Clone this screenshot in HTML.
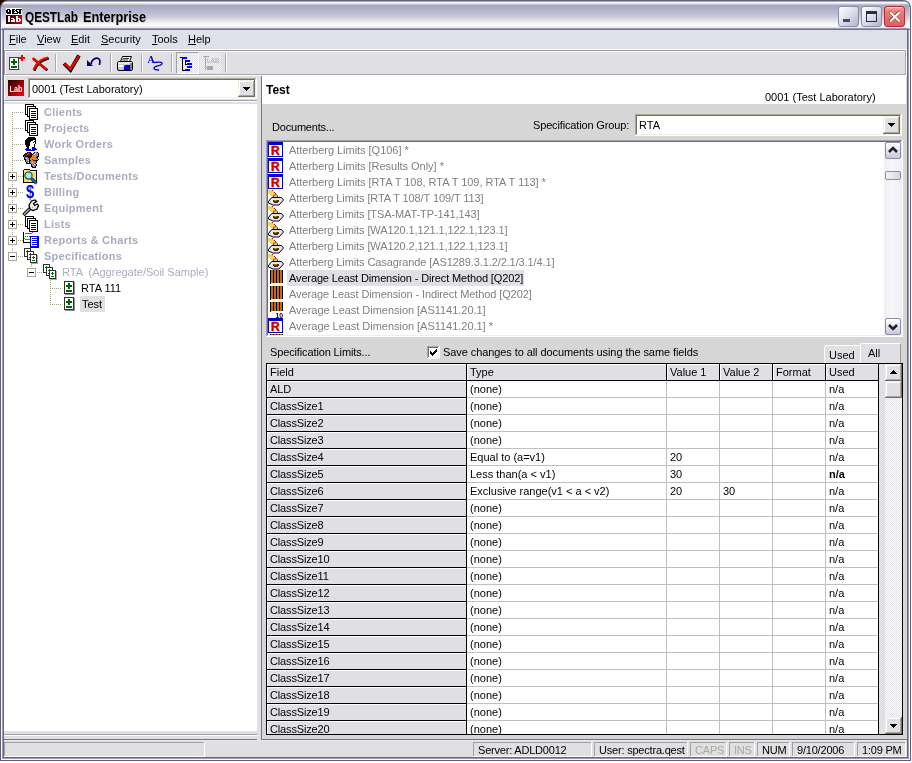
<!DOCTYPE html>
<html><head><meta charset="utf-8">
<style>
*{box-sizing:border-box}
html,body{margin:0;padding:0}
body{will-change:transform;width:912px;height:763px;overflow:hidden;position:relative;background:#fff;font-family:"Liberation Sans",sans-serif;font-size:11px;color:#000}
.a{position:absolute}
.t{position:absolute;white-space:pre;line-height:13px}
.u{text-decoration:underline;text-underline-offset:1px}
svg{position:absolute;overflow:visible}
.g{color:#A9ADC0;font-weight:bold}
</style></head><body>

<div class="a" style="left:0px;top:0px;width:911px;height:761px;background:#5F5E7E;"></div>
<div class="a" style="left:1px;top:1px;width:909px;height:759px;background:#FAFAFC;"></div>
<div class="a" style="left:2px;top:2px;width:907px;height:757px;background:#9C9BB4;"></div>
<div class="a" style="left:3px;top:3px;width:905px;height:755px;background:#676685;"></div>
<div class="a" style="left:4px;top:30px;width:903px;height:727px;background:#E0DFE3;"></div>
<div class="a" style="left:0px;top:0px;width:8px;height:8px;background:#2A0505;"></div>
<div class="a" style="left:902px;top:0px;width:10px;height:8px;background:#F4F4FA;"></div>
<div class="a" style="left:0;top:0;width:911px;height:30px;border-radius:8px 8px 0 0;background:#5F5E7E"></div>
<div class="a" style="left:1px;top:1px;width:909px;height:29px;border-radius:7px 7px 0 0;overflow:hidden;background:linear-gradient(to bottom,#A8A7BE 0px,#A8A7BE 1px,#FFFFFF 1px,#FFFFFF 2px,#E4E3EC 2px,#E4E3EC 3px,#C3C3D4 3px,#C3C3D4 4px,#A8A8C2 4px,#A9AAC4 6px,#B8BACD 11px,#CBCDD9 16px,#E6E7ED 20px,#F6F6F8 23px,#FFFFFF 25px,#E9E8E6 26px,#E9E8E6 27px,#9C9AB0 27px,#9C9AB0 28px,#75738F 28px,#75738F 29px)"></div>
<div class="a" style="left:1px;top:7px;width:1px;height:22px;background:linear-gradient(to bottom,#C4C4D6,#FFFFFF)"></div>
<div class="a" style="left:909px;top:7px;width:1px;height:22px;background:linear-gradient(to bottom,#C4C4D6,#FFFFFF)"></div>
<div class="a" style="left:911px;top:0px;width:1px;height:763px;background:#FFFFFF;"></div>
<div class="a" style="left:6px;top:8px;width:16px;height:7px;background:#FFFFFF;"></div>
<div class="a" style="left:6px;top:15px;width:16px;height:9px;background:linear-gradient(100deg,#200000 0%,#700000 45%,#E00000 100%)"></div>
<svg style="left:6px;top:8px" width="16" height="16" viewBox="0 0 16 16" shape-rendering="crispEdges"><rect x="1" y="1" width="3" height="1" fill="#000000"/><rect x="6" y="1" width="3" height="1" fill="#000000"/><rect x="10" y="1" width="6" height="1" fill="#000000"/><rect x="0" y="2" width="2" height="1" fill="#000000"/><rect x="3" y="2" width="2" height="1" fill="#000000"/><rect x="6" y="2" width="2" height="1" fill="#000000"/><rect x="9" y="2" width="2" height="1" fill="#000000"/><rect x="13" y="2" width="2" height="1" fill="#000000"/><rect x="0" y="3" width="2" height="1" fill="#000000"/><rect x="3" y="3" width="2" height="1" fill="#000000"/><rect x="6" y="3" width="3" height="1" fill="#000000"/><rect x="10" y="3" width="2" height="1" fill="#000000"/><rect x="13" y="3" width="2" height="1" fill="#000000"/><rect x="0" y="4" width="5" height="1" fill="#000000"/><rect x="6" y="4" width="2" height="1" fill="#000000"/><rect x="11" y="4" width="4" height="1" fill="#000000"/><rect x="1" y="5" width="4" height="1" fill="#000000"/><rect x="6" y="5" width="6" height="1" fill="#000000"/><rect x="13" y="5" width="2" height="1" fill="#000000"/><rect x="2" y="8" width="2" height="1" fill="#FFFFFF"/><rect x="10" y="8" width="2" height="1" fill="#FFFFFF"/><rect x="2" y="9" width="2" height="1" fill="#FFFFFF"/><rect x="10" y="9" width="2" height="1" fill="#FFFFFF"/><rect x="2" y="10" width="2" height="1" fill="#FFFFFF"/><rect x="5" y="10" width="3" height="1" fill="#FFFFFF"/><rect x="10" y="10" width="4" height="1" fill="#FFFFFF"/><rect x="2" y="11" width="2" height="1" fill="#FFFFFF"/><rect x="7" y="11" width="2" height="1" fill="#FFFFFF"/><rect x="10" y="11" width="2" height="1" fill="#FFFFFF"/><rect x="13" y="11" width="2" height="1" fill="#FFFFFF"/><rect x="2" y="12" width="2" height="1" fill="#FFFFFF"/><rect x="5" y="12" width="4" height="1" fill="#FFFFFF"/><rect x="10" y="12" width="2" height="1" fill="#FFFFFF"/><rect x="13" y="12" width="2" height="1" fill="#FFFFFF"/><rect x="2" y="13" width="2" height="1" fill="#FFFFFF"/><rect x="5" y="13" width="4" height="1" fill="#FFFFFF"/><rect x="10" y="13" width="4" height="1" fill="#FFFFFF"/></svg>
<div class="t" style="left:25px;top:9px;font-size:14px;font-weight:bold;line-height:17px;transform:scaleX(0.84);transform-origin:0 0;text-shadow:1px 1px 0 rgba(120,120,140,0.25)">QESTLab</div>
<div class="t" style="left:83px;top:9px;font-size:14px;font-weight:bold;line-height:17px;transform:scaleX(0.91);transform-origin:0 0;text-shadow:1px 1px 0 rgba(120,120,140,0.25)">Enterprise</div>
<div class="a" style="left:838px;top:6px;width:21px;height:21px;border:1px solid #8C8CA6;border-radius:3px;background:linear-gradient(135deg,#FFFFFF 0%,#E8E8F2 35%,#C4C4D6 80%,#B0B0C8 100%)"></div>
<div class="a" style="left:861px;top:6px;width:21px;height:21px;border:1px solid #8C8CA6;border-radius:3px;background:linear-gradient(135deg,#FFFFFF 0%,#E8E8F2 35%,#C4C4D6 80%,#B0B0C8 100%)"></div>
<div class="a" style="left:843px;top:19px;width:7px;height:3px;background:#4A4A68;"></div>
<div class="a" style="left:866px;top:11px;width:11px;height:11px;border:1px solid #2A2A40;border-top-width:3px"></div>
<div class="a" style="left:884px;top:6px;width:21px;height:21px;border:1px solid #B8283C;border-radius:3px;background:linear-gradient(to bottom,#F2A89A 0%,#E88078 25%,#E07068 60%,#D86060 100%)"></div>
<div class="a" style="left:887px;top:7px;width:15px;height:1px;background:#F4D8A0;"></div>
<svg style="left:884px;top:6px" width="21" height="21" viewBox="0 0 21 21" shape-rendering="crispEdges"><path d="M5.6 5.6 L15.4 15.4 M15.4 5.6 L5.6 15.4" stroke="#3A1010" stroke-width="2.6" shape-rendering="geometricPrecision"/><path d="M6 6 L15.6 15.6 M15.6 6 L6 15.6" stroke="#fff" stroke-width="2.1" shape-rendering="geometricPrecision"/></svg>
<div class="a" style="left:4px;top:30px;width:903px;height:19px;background:#DEE0EA;"></div>
<div class="a" style="left:4px;top:49px;width:903px;height:1px;background:#FFFFFF;"></div>
<div class="t" style="left:9px;top:33px;"><span class='u'>F</span>ile</div>
<div class="t" style="left:37px;top:33px;"><span class='u'>V</span>iew</div>
<div class="t" style="left:71px;top:33px;"><span class='u'>E</span>dit</div>
<div class="t" style="left:101px;top:33px;"><span class='u'>S</span>ecurity</div>
<div class="t" style="left:152px;top:33px;"><span class='u'>T</span>ools</div>
<div class="t" style="left:188px;top:33px;"><span class='u'>H</span>elp</div>
<div class="a" style="left:4px;top:50px;width:903px;height:1px;background:#9C9CA0;"></div>
<div class="a" style="left:4px;top:51px;width:902px;height:23px;background:#E0DFE3;"></div>
<div class="a" style="left:5px;top:51px;width:900px;height:1px;background:#FFFFFF;"></div>
<div class="a" style="left:4px;top:50px;width:1px;height:25px;background:#9C9CA0;"></div>
<div class="a" style="left:5px;top:51px;width:1px;height:23px;background:#FFFFFF;"></div>
<div class="a" style="left:4px;top:74px;width:903px;height:1px;background:#A8A7AC;"></div>
<div class="a" style="left:4px;top:75px;width:903px;height:1px;background:#FFFFFF;"></div>
<div class="a" style="left:905px;top:50px;width:1px;height:25px;background:#A8A7AC;"></div>
<div class="a" style="left:906px;top:50px;width:1px;height:25px;background:#FFFFFF;"></div>
<div class="a" style="left:55px;top:54px;width:1px;height:18px;background:#A8A7AC;"></div>
<div class="a" style="left:56px;top:54px;width:1px;height:18px;background:#FFFFFF;"></div>
<div class="a" style="left:110px;top:54px;width:1px;height:18px;background:#A8A7AC;"></div>
<div class="a" style="left:111px;top:54px;width:1px;height:18px;background:#FFFFFF;"></div>
<div class="a" style="left:141px;top:54px;width:1px;height:18px;background:#A8A7AC;"></div>
<div class="a" style="left:142px;top:54px;width:1px;height:18px;background:#FFFFFF;"></div>
<div class="a" style="left:171px;top:54px;width:1px;height:18px;background:#A8A7AC;"></div>
<div class="a" style="left:172px;top:54px;width:1px;height:18px;background:#FFFFFF;"></div>
<div class="a" style="left:225px;top:54px;width:1px;height:18px;background:#A8A7AC;"></div>
<div class="a" style="left:226px;top:54px;width:1px;height:18px;background:#FFFFFF;"></div>
<svg style="left:9px;top:54px" width="17" height="16" viewBox="0 0 17 16" shape-rendering="crispEdges">
<rect x="0.5" y="3.5" width="9" height="12" fill="#fff" stroke="#404040"/>
<rect x="10" y="15" width="1" height="1" fill="#A0A0A0"/>
<rect x="4" y="5" width="2" height="6" fill="#006400"/><rect x="2" y="7" width="6" height="2" fill="#006400"/>
<rect x="2" y="12" width="6" height="2" fill="#006400"/>
<rect x="12" y="1" width="2" height="6" fill="#FF0000"/><rect x="10" y="3" width="6" height="2" fill="#FF0000"/>
</svg>
<svg style="left:31px;top:56px" width="18" height="16" viewBox="0 0 18 16" shape-rendering="crispEdges"><g transform="translate(0.8,0.8)"><path d="M1.5 2 L15.5 13.5 M17 1.5 C11 3 7 6 5 9 L2.5 14" stroke="#000" stroke-width="2.4" fill="none" shape-rendering="geometricPrecision"/></g><path d="M1.5 2 L15.5 13.5 M17 1.5 C11 3 7 6 5 9 L2.5 14" stroke="#FF0000" stroke-width="2.2" fill="none" shape-rendering="geometricPrecision"/></svg>
<svg style="left:63px;top:54px" width="18" height="18" viewBox="0 0 18 18" shape-rendering="crispEdges"><path d="M1 9.5 L7.5 16 L16 1.5" stroke="#000" stroke-width="3.8" fill="none" stroke-linejoin="miter" shape-rendering="geometricPrecision"/><path d="M1.6 9.6 L7.5 15 L15.6 2" stroke="#FF0000" stroke-width="2.1" fill="none" shape-rendering="geometricPrecision"/></svg>
<svg style="left:86px;top:56px" width="16" height="14" viewBox="0 0 16 14" shape-rendering="crispEdges"><path d="M5 8 C6 2 13 0 14 5 L13.5 9" stroke="#000080" stroke-width="1.7" fill="none" shape-rendering="geometricPrecision"/><path d="M1 4 L1 10 L7 10 Z" fill="#000080" shape-rendering="geometricPrecision"/></svg>
<svg style="left:117px;top:55px" width="17" height="17" viewBox="0 0 17 17" shape-rendering="crispEdges">
<path d="M5.5 1.5 L14.5 1.5 L12.5 6.5 L3.5 6.5 Z" fill="#fff" stroke="#000" shape-rendering="geometricPrecision"/>
<path d="M6 3.5 L12 3.5 M5 5 L11 5" stroke="#000" stroke-width="0.8" shape-rendering="geometricPrecision"/>
<rect x="0.5" y="6.5" width="15" height="9" rx="1.5" fill="#C8C8C8" stroke="#000" shape-rendering="geometricPrecision"/>
<rect x="1" y="7" width="14" height="2" fill="#E8E8E8"/>
<rect x="1" y="10" width="5" height="2" fill="#fff"/>
<rect x="7" y="10" width="6" height="5" fill="#000"/>
<rect x="7" y="10" width="5" height="4" fill="#0000E0"/>
<rect x="7" y="10" width="1" height="1" fill="#00E0FF"/>
<rect x="13" y="8" width="2" height="7" fill="#808080"/>
</svg>
<svg style="left:147px;top:54px" width="18" height="18" viewBox="0 0 18 18" shape-rendering="crispEdges"><text x="0.5" y="8.5" font-family="Liberation Serif" font-weight="bold" font-size="10" fill="#0000E0">A</text><path d="M7 8.5 C10 8 16 7.5 15 10 C14 12 7 12 7 14 C7 16 10 16 12 16" stroke="#0000E0" stroke-width="1.3" fill="none" shape-rendering="geometricPrecision"/></svg>
<div class="a" style="left:176px;top:52px;width:23px;height:22px;border:1px solid;border-color:#A0A0A4 #FFFFFF #FFFFFF #A0A0A4;background:repeating-conic-gradient(#F6F6F8 0 25%,#E0DFE3 0 50%) 0 0/2px 2px"></div>
<svg style="left:180px;top:55px" width="14" height="17" viewBox="0 0 14 17" shape-rendering="crispEdges">
<rect x="0" y="2" width="3" height="1" fill="#000"/><rect x="2" y="2" width="1" height="14" fill="#000"/>
<rect x="2" y="15" width="4" height="1" fill="#000"/>
<rect x="2" y="2" width="5" height="2" fill="#0000FF"/>
<rect x="5" y="5" width="5" height="2" fill="#0000FF"/>
<rect x="5" y="5" width="1" height="5" fill="#000"/><rect x="5" y="9" width="2" height="1" fill="#000"/>
<rect x="7" y="8" width="5" height="2" fill="#0000FF"/>
<rect x="7" y="11" width="5" height="2" fill="#0000FF"/>
<rect x="5" y="14" width="5" height="2" fill="#0000FF"/>
</svg>
<div class="a" style="left:200px;top:53px;width:21px;height:20px;background:repeating-conic-gradient(#F2F2F4 0 25%,#E0DFE3 0 50%) 0 0/2px 2px"></div>
<svg style="left:201px;top:55px" width="19" height="16" viewBox="0 0 19 16" shape-rendering="crispEdges">
<g fill="#A8A8AC">
<rect x="2" y="1" width="6" height="1"/><rect x="4" y="1" width="1" height="14"/>
<rect x="6" y="11" width="6" height="2"/><rect x="6" y="13" width="6" height="2"/>
<rect x="5" y="12" width="1" height="1"/>
</g>
<text x="6" y="8" font-family="Liberation Sans" font-size="6.5" fill="#A8A8AC">LAB</text>
</svg>
<div class="a" style="left:4px;top:76px;width:257px;height:663px;background:#E0DFE3;"></div>
<div class="a" style="left:4px;top:76px;width:1px;height:26px;background:#FFFFFF;"></div>
<svg style="left:8px;top:80px" width="16" height="16" viewBox="0 0 16 16" shape-rendering="crispEdges"><defs><linearGradient id="lg2" x1="0" y1="0" x2="1" y2="1"><stop offset="0" stop-color="#200000"/><stop offset="0.5" stop-color="#900000"/><stop offset="1" stop-color="#FF0000"/></linearGradient></defs>
<rect x="0" y="0" width="16" height="16" fill="url(#lg2)"/>
<text x="1.5" y="11.5" font-family="Liberation Sans" font-weight="bold" font-size="8.5" fill="#fff" textLength="13" lengthAdjust="spacingAndGlyphs" shape-rendering="geometricPrecision">Lab</text></svg>
<div class="a" style="left:8px;top:96px;width:16px;height:1px;background:#D8E4EC;"></div>
<div class="a" style="left:28px;top:78px;width:229px;height:1px;background:#ACA899;"></div>
<div class="a" style="left:28px;top:78px;width:1px;height:21px;background:#ACA899;"></div>
<div class="a" style="left:29px;top:79px;width:227px;height:1px;background:#716F64;"></div>
<div class="a" style="left:29px;top:79px;width:1px;height:19px;background:#716F64;"></div>
<div class="a" style="left:28px;top:98px;width:229px;height:1px;background:#FFFFFF;"></div>
<div class="a" style="left:256px;top:78px;width:1px;height:21px;background:#FFFFFF;"></div>
<div class="a" style="left:29px;top:97px;width:227px;height:1px;background:#F1EFE2;"></div>
<div class="a" style="left:255px;top:79px;width:1px;height:19px;background:#F1EFE2;"></div>
<div class="a" style="left:30px;top:80px;width:225px;height:17px;background:#FFFFFF;"></div>
<div class="t" style="left:32px;top:83px;">0001 (Test Laboratory)</div>
<div class="a" style="left:238px;top:80px;width:17px;height:17px;background:#E0DFE3;"></div>
<div class="a" style="left:238px;top:80px;width:17px;height:1px;background:#F1EFE2;"></div>
<div class="a" style="left:238px;top:80px;width:1px;height:17px;background:#F1EFE2;"></div>
<div class="a" style="left:239px;top:81px;width:15px;height:1px;background:#FFFFFF;"></div>
<div class="a" style="left:239px;top:81px;width:1px;height:15px;background:#FFFFFF;"></div>
<div class="a" style="left:238px;top:96px;width:17px;height:1px;background:#716F64;"></div>
<div class="a" style="left:254px;top:80px;width:1px;height:17px;background:#716F64;"></div>
<div class="a" style="left:239px;top:95px;width:15px;height:1px;background:#ACA899;"></div>
<div class="a" style="left:253px;top:81px;width:1px;height:15px;background:#ACA899;"></div>
<div class="a" style="left:243px;top:87px;width:7px;height:1px;background:#000;"></div>
<div class="a" style="left:244px;top:88px;width:5px;height:1px;background:#000;"></div>
<div class="a" style="left:245px;top:89px;width:3px;height:1px;background:#000;"></div>
<div class="a" style="left:246px;top:90px;width:1px;height:1px;background:#000;"></div>
<div class="a" style="left:4px;top:100px;width:253px;height:1px;background:#A0A0A8;"></div>
<div class="a" style="left:4px;top:101px;width:253px;height:1px;background:#FFFFFF;"></div>
<div class="a" style="left:4px;top:102px;width:253px;height:2px;background:#E0DFE3;"></div>
<div class="a" style="left:4px;top:104px;width:253px;height:627px;background:#FFFFFF;"></div>
<div class="a" style="left:4px;top:734px;width:253px;height:1px;background:#A0A0A8;"></div>
<div class="a" style="left:4px;top:735px;width:253px;height:1px;background:#FFFFFF;"></div>
<div class="a" style="left:4px;top:739px;width:253px;height:1px;background:#7A7868;"></div>
<div class="a" style="left:12px;top:112px;width:1px;height:145px;background:repeating-linear-gradient(to bottom,#A0A08C 0 1px,transparent 1px 2px)"></div>
<div class="a" style="left:12px;top:112px;width:12px;height:1px;background:repeating-linear-gradient(to right,#A0A08C 0 1px,transparent 1px 2px)"></div>
<div class="a" style="left:12px;top:128px;width:12px;height:1px;background:repeating-linear-gradient(to right,#A0A08C 0 1px,transparent 1px 2px)"></div>
<div class="a" style="left:12px;top:144px;width:12px;height:1px;background:repeating-linear-gradient(to right,#A0A08C 0 1px,transparent 1px 2px)"></div>
<div class="a" style="left:12px;top:160px;width:12px;height:1px;background:repeating-linear-gradient(to right,#A0A08C 0 1px,transparent 1px 2px)"></div>
<div class="a" style="left:12px;top:176px;width:12px;height:1px;background:repeating-linear-gradient(to right,#A0A08C 0 1px,transparent 1px 2px)"></div>
<div class="a" style="left:12px;top:192px;width:12px;height:1px;background:repeating-linear-gradient(to right,#A0A08C 0 1px,transparent 1px 2px)"></div>
<div class="a" style="left:12px;top:208px;width:12px;height:1px;background:repeating-linear-gradient(to right,#A0A08C 0 1px,transparent 1px 2px)"></div>
<div class="a" style="left:12px;top:224px;width:12px;height:1px;background:repeating-linear-gradient(to right,#A0A08C 0 1px,transparent 1px 2px)"></div>
<div class="a" style="left:12px;top:240px;width:12px;height:1px;background:repeating-linear-gradient(to right,#A0A08C 0 1px,transparent 1px 2px)"></div>
<div class="a" style="left:12px;top:256px;width:12px;height:1px;background:repeating-linear-gradient(to right,#A0A08C 0 1px,transparent 1px 2px)"></div>
<div class="a" style="left:31px;top:264px;width:1px;height:9px;background:repeating-linear-gradient(to bottom,#A0A08C 0 1px,transparent 1px 2px)"></div>
<div class="a" style="left:37px;top:272px;width:6px;height:1px;background:repeating-linear-gradient(to right,#A0A08C 0 1px,transparent 1px 2px)"></div>
<div class="a" style="left:50px;top:280px;width:1px;height:25px;background:repeating-linear-gradient(to bottom,#A0A08C 0 1px,transparent 1px 2px)"></div>
<div class="a" style="left:50px;top:288px;width:11px;height:1px;background:repeating-linear-gradient(to right,#A0A08C 0 1px,transparent 1px 2px)"></div>
<div class="a" style="left:50px;top:304px;width:11px;height:1px;background:repeating-linear-gradient(to right,#A0A08C 0 1px,transparent 1px 2px)"></div>
<div class="a" style="left:8px;top:172px;width:9px;height:9px;background:#FFFFFF;border:1px solid #ACA899"></div>
<div class="a" style="left:10px;top:176px;width:5px;height:1px;background:#000;"></div>
<div class="a" style="left:12px;top:174px;width:1px;height:5px;background:#000;"></div>
<div class="a" style="left:8px;top:188px;width:9px;height:9px;background:#FFFFFF;border:1px solid #ACA899"></div>
<div class="a" style="left:10px;top:192px;width:5px;height:1px;background:#000;"></div>
<div class="a" style="left:12px;top:190px;width:1px;height:5px;background:#000;"></div>
<div class="a" style="left:8px;top:204px;width:9px;height:9px;background:#FFFFFF;border:1px solid #ACA899"></div>
<div class="a" style="left:10px;top:208px;width:5px;height:1px;background:#000;"></div>
<div class="a" style="left:12px;top:206px;width:1px;height:5px;background:#000;"></div>
<div class="a" style="left:8px;top:220px;width:9px;height:9px;background:#FFFFFF;border:1px solid #ACA899"></div>
<div class="a" style="left:10px;top:224px;width:5px;height:1px;background:#000;"></div>
<div class="a" style="left:12px;top:222px;width:1px;height:5px;background:#000;"></div>
<div class="a" style="left:8px;top:236px;width:9px;height:9px;background:#FFFFFF;border:1px solid #ACA899"></div>
<div class="a" style="left:10px;top:240px;width:5px;height:1px;background:#000;"></div>
<div class="a" style="left:12px;top:238px;width:1px;height:5px;background:#000;"></div>
<div class="a" style="left:8px;top:252px;width:9px;height:9px;background:#FFFFFF;border:1px solid #ACA899"></div>
<div class="a" style="left:10px;top:256px;width:5px;height:1px;background:#000;"></div>
<div class="a" style="left:27px;top:268px;width:9px;height:9px;background:#FFFFFF;border:1px solid #ACA899"></div>
<div class="a" style="left:29px;top:272px;width:5px;height:1px;background:#000;"></div>
<svg style="left:25px;top:104px" width="16" height="16" viewBox="0 0 16 16" shape-rendering="crispEdges"><rect x="0.5" y="0.5" width="8" height="10" fill="#fff" stroke="#000"/>
<rect x="2.5" y="2.5" width="8" height="10" fill="#fff" stroke="#000"/>
<rect x="4.5" y="4.5" width="8" height="11" fill="#fff" stroke="#000"/>
<rect x="6" y="7" width="5" height="1" fill="#000"/><rect x="6" y="9" width="5" height="1" fill="#000"/><rect x="6" y="11" width="5" height="1" fill="#000"/><rect x="6" y="13" width="5" height="1" fill="#000"/></svg>
<svg style="left:25px;top:120px" width="16" height="16" viewBox="0 0 16 16" shape-rendering="crispEdges"><rect x="0.5" y="0.5" width="8" height="10" fill="#fff" stroke="#000"/>
<rect x="2.5" y="2.5" width="8" height="10" fill="#fff" stroke="#000"/>
<rect x="4.5" y="4.5" width="8" height="11" fill="#fff" stroke="#000"/>
<rect x="6" y="7" width="5" height="1" fill="#000"/><rect x="6" y="9" width="5" height="1" fill="#000"/><rect x="6" y="11" width="5" height="1" fill="#000"/><rect x="6" y="13" width="5" height="1" fill="#000"/></svg>
<svg style="left:25px;top:216px" width="16" height="16" viewBox="0 0 16 16" shape-rendering="crispEdges"><rect x="0.5" y="0.5" width="8" height="10" fill="#fff" stroke="#000"/>
<rect x="2.5" y="2.5" width="8" height="10" fill="#fff" stroke="#000"/>
<rect x="4.5" y="4.5" width="8" height="11" fill="#fff" stroke="#000"/>
<rect x="6" y="7" width="5" height="1" fill="#000"/><rect x="6" y="9" width="5" height="1" fill="#000"/><rect x="6" y="11" width="5" height="1" fill="#000"/><rect x="6" y="13" width="5" height="1" fill="#000"/></svg>
<svg style="left:22px;top:134px" width="16" height="17" viewBox="0 0 16 17" shape-rendering="crispEdges"><rect x="6" y="3" width="7" height="1" fill="#000000"/><rect x="5" y="4" width="9" height="1" fill="#000000"/><rect x="4" y="5" width="10" height="1" fill="#000000"/><rect x="3" y="6" width="8" height="1" fill="#000000"/><rect x="11" y="6" width="2" height="1" fill="#FFFFFF"/><rect x="13" y="6" width="1" height="1" fill="#000000"/><rect x="3" y="7" width="6" height="1" fill="#000000"/><rect x="9" y="7" width="3" height="1" fill="#FFFFFF"/><rect x="12" y="7" width="2" height="1" fill="#000000"/><rect x="3" y="8" width="5" height="1" fill="#000000"/><rect x="8" y="8" width="3" height="1" fill="#FFFFFF"/><rect x="11" y="8" width="1" height="1" fill="#0000E0"/><rect x="12" y="8" width="1" height="1" fill="#FFFFFF"/><rect x="13" y="8" width="1" height="1" fill="#000000"/><rect x="3" y="9" width="5" height="1" fill="#000000"/><rect x="8" y="9" width="5" height="1" fill="#FFFFFF"/><rect x="13" y="9" width="1" height="1" fill="#000000"/><rect x="3" y="10" width="5" height="1" fill="#000000"/><rect x="8" y="10" width="4" height="1" fill="#FFFFFF"/><rect x="12" y="10" width="1" height="1" fill="#000000"/><rect x="4" y="11" width="4" height="1" fill="#000000"/><rect x="8" y="11" width="4" height="1" fill="#FFFFFF"/><rect x="12" y="11" width="1" height="1" fill="#000000"/><rect x="4" y="12" width="3" height="1" fill="#000000"/><rect x="7" y="12" width="5" height="1" fill="#FFFFFF"/><rect x="12" y="12" width="1" height="1" fill="#000000"/><rect x="5" y="13" width="2" height="1" fill="#000000"/><rect x="7" y="13" width="3" height="1" fill="#FFFFFF"/><rect x="10" y="13" width="1" height="1" fill="#000000"/><rect x="11" y="13" width="2" height="1" fill="#0000E0"/><rect x="4" y="14" width="3" height="1" fill="#0000E0"/><rect x="7" y="14" width="3" height="1" fill="#FFFFFF"/><rect x="10" y="14" width="4" height="1" fill="#0000E0"/><rect x="3" y="15" width="6" height="1" fill="#0000E0"/><rect x="9" y="15" width="1" height="1" fill="#FFFFFF"/><rect x="10" y="15" width="5" height="1" fill="#0000E0"/><rect x="4" y="16" width="9" height="1" fill="#0000E0"/></svg>
<svg style="left:22px;top:151px" width="18" height="17" viewBox="0 0 18 17" shape-rendering="crispEdges"><rect x="5" y="1" width="1" height="1" fill="#000000"/><rect x="6" y="1" width="2" height="1" fill="#701000"/><rect x="8" y="1" width="1" height="1" fill="#000000"/><rect x="12" y="1" width="1" height="1" fill="#000000"/><rect x="13" y="1" width="2" height="1" fill="#909090"/><rect x="15" y="1" width="1" height="1" fill="#000000"/><rect x="3" y="2" width="2" height="1" fill="#000000"/><rect x="5" y="2" width="1" height="1" fill="#701000"/><rect x="6" y="2" width="1" height="1" fill="#F08020"/><rect x="7" y="2" width="2" height="1" fill="#701000"/><rect x="9" y="2" width="1" height="1" fill="#000000"/><rect x="11" y="2" width="1" height="1" fill="#000000"/><rect x="12" y="2" width="1" height="1" fill="#909090"/><rect x="13" y="2" width="1" height="1" fill="#D8D8D8"/><rect x="14" y="2" width="2" height="1" fill="#909090"/><rect x="16" y="2" width="1" height="1" fill="#000000"/><rect x="2" y="3" width="1" height="1" fill="#000000"/><rect x="3" y="3" width="2" height="1" fill="#701000"/><rect x="5" y="3" width="1" height="1" fill="#F08020"/><rect x="6" y="3" width="3" height="1" fill="#701000"/><rect x="9" y="3" width="2" height="1" fill="#000000"/><rect x="11" y="3" width="1" height="1" fill="#909090"/><rect x="12" y="3" width="1" height="1" fill="#D8D8D8"/><rect x="13" y="3" width="3" height="1" fill="#909090"/><rect x="16" y="3" width="1" height="1" fill="#000000"/><rect x="1" y="4" width="2" height="1" fill="#000000"/><rect x="3" y="4" width="5" height="1" fill="#701000"/><rect x="8" y="4" width="2" height="1" fill="#000000"/><rect x="10" y="4" width="6" height="1" fill="#909090"/><rect x="16" y="4" width="1" height="1" fill="#000000"/><rect x="1" y="5" width="1" height="1" fill="#000000"/><rect x="2" y="5" width="1" height="1" fill="#909090"/><rect x="3" y="5" width="7" height="1" fill="#000000"/><rect x="10" y="5" width="3" height="1" fill="#F08020"/><rect x="13" y="5" width="2" height="1" fill="#909090"/><rect x="15" y="5" width="2" height="1" fill="#000000"/><rect x="2" y="6" width="1" height="1" fill="#000000"/><rect x="3" y="6" width="3" height="1" fill="#909090"/><rect x="6" y="6" width="3" height="1" fill="#000000"/><rect x="9" y="6" width="5" height="1" fill="#F08020"/><rect x="14" y="6" width="2" height="1" fill="#000000"/><rect x="2" y="7" width="1" height="1" fill="#000000"/><rect x="3" y="7" width="1" height="1" fill="#909090"/><rect x="4" y="7" width="1" height="1" fill="#D8D8D8"/><rect x="5" y="7" width="2" height="1" fill="#909090"/><rect x="7" y="7" width="1" height="1" fill="#000000"/><rect x="8" y="7" width="7" height="1" fill="#F08020"/><rect x="15" y="7" width="1" height="1" fill="#000000"/><rect x="2" y="8" width="2" height="1" fill="#000000"/><rect x="4" y="8" width="3" height="1" fill="#909090"/><rect x="7" y="8" width="1" height="1" fill="#000000"/><rect x="8" y="8" width="2" height="1" fill="#F08020"/><rect x="10" y="8" width="1" height="1" fill="#701000"/><rect x="11" y="8" width="5" height="1" fill="#F08020"/><rect x="16" y="8" width="1" height="1" fill="#000000"/><rect x="3" y="9" width="1" height="1" fill="#000000"/><rect x="4" y="9" width="2" height="1" fill="#909090"/><rect x="6" y="9" width="1" height="1" fill="#D8D8D8"/><rect x="7" y="9" width="2" height="1" fill="#000000"/><rect x="9" y="9" width="2" height="1" fill="#F08020"/><rect x="11" y="9" width="2" height="1" fill="#701000"/><rect x="13" y="9" width="3" height="1" fill="#000000"/><rect x="3" y="10" width="1" height="1" fill="#000000"/><rect x="4" y="10" width="3" height="1" fill="#909090"/><rect x="7" y="10" width="1" height="1" fill="#000000"/><rect x="8" y="10" width="6" height="1" fill="#909090"/><rect x="14" y="10" width="1" height="1" fill="#000000"/><rect x="4" y="11" width="1" height="1" fill="#000000"/><rect x="5" y="11" width="1" height="1" fill="#909090"/><rect x="6" y="11" width="1" height="1" fill="#D8D8D8"/><rect x="7" y="11" width="1" height="1" fill="#000000"/><rect x="8" y="11" width="2" height="1" fill="#909090"/><rect x="10" y="11" width="1" height="1" fill="#D8D8D8"/><rect x="11" y="11" width="3" height="1" fill="#909090"/><rect x="14" y="11" width="1" height="1" fill="#000000"/><rect x="4" y="12" width="5" height="1" fill="#000000"/><rect x="9" y="12" width="4" height="1" fill="#909090"/><rect x="13" y="12" width="1" height="1" fill="#000000"/><rect x="9" y="13" width="1" height="1" fill="#000000"/><rect x="10" y="13" width="2" height="1" fill="#909090"/><rect x="12" y="13" width="1" height="1" fill="#D8D8D8"/><rect x="13" y="13" width="1" height="1" fill="#909090"/><rect x="14" y="13" width="1" height="1" fill="#000000"/><rect x="9" y="14" width="1" height="1" fill="#000000"/><rect x="10" y="14" width="4" height="1" fill="#909090"/><rect x="14" y="14" width="1" height="1" fill="#000000"/><rect x="9" y="15" width="2" height="1" fill="#000000"/><rect x="11" y="15" width="2" height="1" fill="#909090"/><rect x="13" y="15" width="1" height="1" fill="#000000"/><rect x="10" y="16" width="4" height="1" fill="#000000"/></svg>
<svg style="left:23px;top:168px" width="16" height="17" viewBox="0 0 16 17" shape-rendering="crispEdges"><path d="M0.5 2.5 L1.5 1.5 L6.5 1.5 L7.5 2.5 L13.5 2.5 L13.5 14.5 L0.5 14.5 Z" fill="#F4E070" stroke="#000" shape-rendering="crispEdges"/>
<rect x="1" y="3" width="12" height="11" fill="#F0E060"/>
<rect x="1" y="3" width="12" height="1" fill="#FFF8B0"/>
<circle cx="5.5" cy="7.5" r="3.6" fill="#90F0F8" stroke="#404040" stroke-width="1.2" shape-rendering="geometricPrecision"/>
<path d="M8.5 10.5 L13.5 15.5" stroke="#000" stroke-width="3" shape-rendering="geometricPrecision"/>
<path d="M8.5 10.5 L13.5 15.5" stroke="#0080FF" stroke-width="1.6" shape-rendering="geometricPrecision"/></svg>
<div class="t" style="left:26px;top:182px;font-size:19px;line-height:20px;font-weight:bold;color:#0000FF;transform:scaleX(0.78);transform-origin:0 0">$</div>
<svg style="left:22px;top:199px" width="18" height="18" viewBox="0 0 18 18" shape-rendering="crispEdges"><path d="M1.5 16 L9 8.5" stroke="#000" stroke-width="3.4" shape-rendering="geometricPrecision"/>
<path d="M2 15.5 L9 8.5" stroke="#B0B0B0" stroke-width="1.6" shape-rendering="geometricPrecision"/>
<path d="M8 10 L7 6 L9.5 2 L13 1 L14.5 2.5 L11.5 4.5 L12.5 6.5 L15.5 5 L16.5 6.5 L15 10 L11 11.5 Z" fill="#F0F0F0" stroke="#000" stroke-width="1.3" shape-rendering="geometricPrecision"/>
<path d="M10 9 L9.5 7 L11 8 Z" fill="#A0A0A0"/></svg>
<svg style="left:23px;top:232px" width="17" height="17" viewBox="0 0 17 17" shape-rendering="crispEdges"><rect x="0" y="0" width="1" height="11" fill="#000"/><rect x="0" y="10" width="9" height="1" fill="#000"/>
<rect x="2" y="1" width="7" height="1" fill="#E000E0"/><rect x="9" y="0" width="1" height="1" fill="#E000E0"/>
<rect x="2" y="4" width="1" height="1" fill="#FF0000"/><rect x="4" y="4" width="1" height="1" fill="#FF0000"/><rect x="6" y="4" width="1" height="1" fill="#FF0000"/><rect x="8" y="4" width="1" height="1" fill="#FF0000"/>
<rect x="2" y="7" width="5" height="1" fill="#00C000"/><rect x="1" y="6" width="1" height="1" fill="#00C000"/>
<rect x="7" y="4" width="9" height="12" fill="#0000E0"/><rect x="8" y="5" width="6" height="9" fill="#fff"/>
<rect x="9" y="6" width="5" height="1" fill="#0000E0"/><rect x="9" y="8" width="5" height="1" fill="#0000E0"/><rect x="9" y="10" width="5" height="1" fill="#0000E0"/><rect x="9" y="12" width="5" height="1" fill="#0000E0"/></svg>
<svg style="left:24px;top:248px" width="16" height="16" viewBox="0 0 16 16" shape-rendering="crispEdges"><rect x="0.5" y="0.5" width="6" height="8" fill="#fff" stroke="#303030"/>
<rect x="3" y="2" width="1" height="3" fill="#007000"/><rect x="2" y="3" width="3" height="1" fill="#007000"/>
<rect x="3.5" y="3.5" width="6" height="8" fill="#fff" stroke="#303030"/>
<rect x="6" y="5" width="1" height="3" fill="#007000"/><rect x="5" y="6" width="3" height="1" fill="#007000"/><rect x="5" y="9" width="3" height="1" fill="#007000"/>
<rect x="6.5" y="6.5" width="6" height="8" fill="#fff" stroke="#303030"/>
<rect x="9" y="8" width="1" height="3" fill="#007000"/><rect x="8" y="9" width="3" height="1" fill="#007000"/><rect x="8" y="12" width="3" height="1" fill="#007000"/>
<rect x="13" y="7" width="1" height="9" fill="#A8A8A8"/><rect x="7" y="15" width="7" height="1" fill="#A8A8A8"/></svg>
<svg style="left:43px;top:264px" width="16" height="16" viewBox="0 0 16 16" shape-rendering="crispEdges"><rect x="0.5" y="0.5" width="6" height="8" fill="#fff" stroke="#303030"/>
<rect x="3" y="2" width="1" height="3" fill="#007000"/><rect x="2" y="3" width="3" height="1" fill="#007000"/>
<rect x="3.5" y="3.5" width="6" height="8" fill="#fff" stroke="#303030"/>
<rect x="6" y="5" width="1" height="3" fill="#007000"/><rect x="5" y="6" width="3" height="1" fill="#007000"/><rect x="5" y="9" width="3" height="1" fill="#007000"/>
<rect x="6.5" y="6.5" width="6" height="8" fill="#fff" stroke="#303030"/>
<rect x="9" y="8" width="1" height="3" fill="#007000"/><rect x="8" y="9" width="3" height="1" fill="#007000"/><rect x="8" y="12" width="3" height="1" fill="#007000"/>
<rect x="13" y="7" width="1" height="9" fill="#A8A8A8"/><rect x="7" y="15" width="7" height="1" fill="#A8A8A8"/></svg>
<svg style="left:64px;top:281px" width="12" height="14" viewBox="0 0 12 14" shape-rendering="crispEdges"><rect x="0.5" y="0.5" width="9" height="12" fill="#fff" stroke="#303030"/>
<rect x="4" y="2" width="2" height="6" fill="#006400"/><rect x="2" y="4" width="6" height="2" fill="#006400"/>
<rect x="2" y="9" width="6" height="2" fill="#006400"/>
<rect x="10" y="1" width="1" height="13" fill="#909090"/><rect x="1" y="13" width="10" height="1" fill="#909090"/></svg>
<svg style="left:64px;top:297px" width="12" height="14" viewBox="0 0 12 14" shape-rendering="crispEdges"><rect x="0.5" y="0.5" width="9" height="12" fill="#fff" stroke="#303030"/>
<rect x="4" y="2" width="2" height="6" fill="#006400"/><rect x="2" y="4" width="6" height="2" fill="#006400"/>
<rect x="2" y="9" width="6" height="2" fill="#006400"/>
<rect x="10" y="1" width="1" height="13" fill="#909090"/><rect x="1" y="13" width="10" height="1" fill="#909090"/></svg>
<div class="t" style="left:44px;top:106px;color:#A9ADC0;font-weight:bold;letter-spacing:0.25px">Clients</div>
<div class="t" style="left:44px;top:122px;color:#A9ADC0;font-weight:bold;letter-spacing:0.25px">Projects</div>
<div class="t" style="left:44px;top:138px;color:#A9ADC0;font-weight:bold;letter-spacing:0.25px">Work Orders</div>
<div class="t" style="left:44px;top:154px;color:#A9ADC0;font-weight:bold;letter-spacing:0.25px">Samples</div>
<div class="t" style="left:44px;top:170px;color:#A9ADC0;font-weight:bold;letter-spacing:0.25px">Tests/Documents</div>
<div class="t" style="left:44px;top:186px;color:#A9ADC0;font-weight:bold;letter-spacing:0.25px">Billing</div>
<div class="t" style="left:44px;top:202px;color:#A9ADC0;font-weight:bold;letter-spacing:0.25px">Equipment</div>
<div class="t" style="left:44px;top:218px;color:#A9ADC0;font-weight:bold;letter-spacing:0.25px">Lists</div>
<div class="t" style="left:44px;top:234px;color:#A9ADC0;font-weight:bold;letter-spacing:0.25px">Reports &amp; Charts</div>
<div class="t" style="left:44px;top:250px;color:#A9ADC0;font-weight:bold;letter-spacing:0.25px">Specifications</div>
<div class="t" style="left:62px;top:266px;color:#A9ADC0">RTA  (Aggregate/Soil Sample)</div>
<div class="t" style="left:81px;top:282px;">RTA 111</div>
<div class="a" style="left:80px;top:296px;width:25px;height:16px;background:#E0DFE3;"></div>
<div class="t" style="left:82px;top:298px;">Test</div>
<div class="a" style="left:261px;top:76px;width:1px;height:664px;background:#7A7868;"></div>
<div class="a" style="left:262px;top:76px;width:645px;height:663px;background:#D6D6D6;"></div>
<div class="a" style="left:262px;top:76px;width:644px;height:28px;background:#FFFFFF;"></div>
<div class="a" style="left:262px;top:739px;width:645px;height:1px;background:#7A7868;"></div>
<div class="t" style="left:266px;top:84px;font-weight:bold;font-size:12px">Test</div>
<div class="t" style="left:765px;top:91px;">0001 (Test Laboratory)</div>
<div class="t" style="left:272px;top:121px;letter-spacing:-0.2px">Documents...</div>
<div class="t" style="left:533px;top:119px;letter-spacing:-0.15px">Specification Group:</div>
<div class="a" style="left:635px;top:114px;width:267px;height:1px;background:#ACA899;"></div>
<div class="a" style="left:635px;top:114px;width:1px;height:22px;background:#ACA899;"></div>
<div class="a" style="left:636px;top:115px;width:265px;height:1px;background:#716F64;"></div>
<div class="a" style="left:636px;top:115px;width:1px;height:20px;background:#716F64;"></div>
<div class="a" style="left:635px;top:135px;width:267px;height:1px;background:#FFFFFF;"></div>
<div class="a" style="left:901px;top:114px;width:1px;height:22px;background:#FFFFFF;"></div>
<div class="a" style="left:636px;top:134px;width:265px;height:1px;background:#F1EFE2;"></div>
<div class="a" style="left:900px;top:115px;width:1px;height:20px;background:#F1EFE2;"></div>
<div class="a" style="left:637px;top:116px;width:263px;height:18px;background:#FFFFFF;"></div>
<div class="t" style="left:639px;top:119px;">RTA</div>
<div class="a" style="left:883px;top:116px;width:17px;height:18px;background:#E0DFE3;"></div>
<div class="a" style="left:883px;top:116px;width:17px;height:1px;background:#F1EFE2;"></div>
<div class="a" style="left:883px;top:116px;width:1px;height:18px;background:#F1EFE2;"></div>
<div class="a" style="left:884px;top:117px;width:15px;height:1px;background:#FFFFFF;"></div>
<div class="a" style="left:884px;top:117px;width:1px;height:16px;background:#FFFFFF;"></div>
<div class="a" style="left:883px;top:133px;width:17px;height:1px;background:#716F64;"></div>
<div class="a" style="left:899px;top:116px;width:1px;height:18px;background:#716F64;"></div>
<div class="a" style="left:884px;top:132px;width:15px;height:1px;background:#ACA899;"></div>
<div class="a" style="left:898px;top:117px;width:1px;height:16px;background:#ACA899;"></div>
<div class="a" style="left:888px;top:123px;width:7px;height:1px;background:#000;"></div>
<div class="a" style="left:889px;top:124px;width:5px;height:1px;background:#000;"></div>
<div class="a" style="left:890px;top:125px;width:3px;height:1px;background:#000;"></div>
<div class="a" style="left:891px;top:126px;width:1px;height:1px;background:#000;"></div>
<div class="a" style="left:266px;top:140px;width:637px;height:1px;background:#A0A0A8;"></div>
<div class="a" style="left:266px;top:140px;width:1px;height:197px;background:#A0A0A8;"></div>
<div class="a" style="left:267px;top:141px;width:635px;height:1px;background:#71706A;"></div>
<div class="a" style="left:267px;top:141px;width:1px;height:195px;background:#71706A;"></div>
<div class="a" style="left:266px;top:336px;width:637px;height:1px;background:#FFFFFF;"></div>
<div class="a" style="left:902px;top:140px;width:1px;height:197px;background:#FFFFFF;"></div>
<div class="a" style="left:267px;top:335px;width:635px;height:1px;background:#F1EFE2;"></div>
<div class="a" style="left:901px;top:141px;width:1px;height:195px;background:#F1EFE2;"></div>
<div class="a" style="left:268px;top:142px;width:633px;height:193px;background:#FFFFFF;"></div>
<div class="a" style="left:884px;top:142px;width:17px;height:193px;background:linear-gradient(to right,#EEEEF4,#F8F8FA 50%,#EEEEF4);"></div>
<div class="a" style="left:885px;top:142px;width:16px;height:17px;border:1px solid #8C8CA6;border-radius:2px;background:linear-gradient(to bottom,#FFFFFF 0%,#E6E6EE 45%,#C8C8D8 100%)"></div>
<svg style="left:885px;top:142px" width="16" height="17" viewBox="0 0 16 17" shape-rendering="crispEdges"><path d="M4 10 L8 6 L12 10" stroke="#202020" stroke-width="2.6" fill="none" shape-rendering="geometricPrecision"/></svg>
<div class="a" style="left:885px;top:318px;width:16px;height:17px;border:1px solid #8C8CA6;border-radius:2px;background:linear-gradient(to bottom,#FFFFFF 0%,#E6E6EE 45%,#C8C8D8 100%)"></div>
<svg style="left:885px;top:318px" width="16" height="17" viewBox="0 0 16 17" shape-rendering="crispEdges"><path d="M4 7 L8 11 L12 7" stroke="#202020" stroke-width="2.6" fill="none" shape-rendering="geometricPrecision"/></svg>
<div class="a" style="left:885px;top:171px;width:16px;height:9px;border:1px solid #8C8CA6;border-radius:2px;background:linear-gradient(to right,#F4F4F8,#D6D6E2)"></div>
<svg style="left:268px;top:142px" width="15" height="15" viewBox="0 0 15 15" shape-rendering="crispEdges"><rect x="0" y="0" width="15" height="15" fill="#0000CC"/><rect x="1" y="3" width="13" height="11" fill="#fff"/>
<text x="3" y="13" font-family="Liberation Sans" font-weight="bold" font-size="12" fill="#CC0000" stroke="#CC0000" stroke-width="0.5" shape-rendering="geometricPrecision">R</text></svg>
<div class="t" style="left:289px;top:144px;color:#808080;letter-spacing:-0.03px">Atterberg Limits [Q106] *</div>
<svg style="left:268px;top:158px" width="15" height="15" viewBox="0 0 15 15" shape-rendering="crispEdges"><rect x="0" y="0" width="15" height="15" fill="#0000CC"/><rect x="1" y="3" width="13" height="11" fill="#fff"/>
<text x="3" y="13" font-family="Liberation Sans" font-weight="bold" font-size="12" fill="#CC0000" stroke="#CC0000" stroke-width="0.5" shape-rendering="geometricPrecision">R</text></svg>
<div class="t" style="left:289px;top:160px;color:#808080;letter-spacing:-0.03px">Atterberg Limits [Results Only] *</div>
<svg style="left:268px;top:174px" width="15" height="15" viewBox="0 0 15 15" shape-rendering="crispEdges"><rect x="0" y="0" width="15" height="15" fill="#0000CC"/><rect x="1" y="3" width="13" height="11" fill="#fff"/>
<text x="3" y="13" font-family="Liberation Sans" font-weight="bold" font-size="12" fill="#CC0000" stroke="#CC0000" stroke-width="0.5" shape-rendering="geometricPrecision">R</text></svg>
<div class="t" style="left:289px;top:176px;color:#808080;letter-spacing:-0.03px">Atterberg Limits [RTA T 108, RTA T 109, RTA T 113] *</div>
<svg style="left:268px;top:190px" width="17" height="16" viewBox="0 0 17 16" shape-rendering="crispEdges"><path d="M0 0 L4 0 L10 6 L7 9 L0 3 Z" fill="#F0D070"/>
<path d="M4.5 0.5 L9.5 5.5" stroke="#902800" stroke-dasharray="1 1"/>
<path d="M5.5 5.5 L8.5 4.5 L9.5 5.5 L9.5 8.5 L7.5 9.5 L5.5 8.5 Z" fill="#F8C090" stroke="#902800" stroke-width="0.9" shape-rendering="geometricPrecision"/>
<path d="M0.5 11.5 L3.5 7.5 L13.5 7.5 L15.5 10 L11 15 L5 15 L0.5 13 Z" fill="#DCE6FA" stroke="#000" stroke-width="1" shape-rendering="geometricPrecision"/>
<path d="M4 11 L6 10 L10 10 L11 11 L9 13 L6 13 Z" fill="#702000"/><rect x="6" y="10" width="3" height="1" fill="#909000"/></svg>
<div class="t" style="left:289px;top:192px;color:#808080;letter-spacing:-0.1px">Atterberg Limits [RTA T 108/T 109/T 113]</div>
<svg style="left:268px;top:206px" width="17" height="16" viewBox="0 0 17 16" shape-rendering="crispEdges"><path d="M0 0 L4 0 L10 6 L7 9 L0 3 Z" fill="#F0D070"/>
<path d="M4.5 0.5 L9.5 5.5" stroke="#902800" stroke-dasharray="1 1"/>
<path d="M5.5 5.5 L8.5 4.5 L9.5 5.5 L9.5 8.5 L7.5 9.5 L5.5 8.5 Z" fill="#F8C090" stroke="#902800" stroke-width="0.9" shape-rendering="geometricPrecision"/>
<path d="M0.5 11.5 L3.5 7.5 L13.5 7.5 L15.5 10 L11 15 L5 15 L0.5 13 Z" fill="#DCE6FA" stroke="#000" stroke-width="1" shape-rendering="geometricPrecision"/>
<path d="M4 11 L6 10 L10 10 L11 11 L9 13 L6 13 Z" fill="#702000"/><rect x="6" y="10" width="3" height="1" fill="#909000"/></svg>
<div class="t" style="left:289px;top:208px;color:#808080;letter-spacing:-0.1px">Atterberg Limits [TSA-MAT-TP-141,143]</div>
<svg style="left:268px;top:222px" width="17" height="16" viewBox="0 0 17 16" shape-rendering="crispEdges"><path d="M0 0 L4 0 L10 6 L7 9 L0 3 Z" fill="#F0D070"/>
<path d="M4.5 0.5 L9.5 5.5" stroke="#902800" stroke-dasharray="1 1"/>
<path d="M5.5 5.5 L8.5 4.5 L9.5 5.5 L9.5 8.5 L7.5 9.5 L5.5 8.5 Z" fill="#F8C090" stroke="#902800" stroke-width="0.9" shape-rendering="geometricPrecision"/>
<path d="M0.5 11.5 L3.5 7.5 L13.5 7.5 L15.5 10 L11 15 L5 15 L0.5 13 Z" fill="#DCE6FA" stroke="#000" stroke-width="1" shape-rendering="geometricPrecision"/>
<path d="M4 11 L6 10 L10 10 L11 11 L9 13 L6 13 Z" fill="#702000"/><rect x="6" y="10" width="3" height="1" fill="#909000"/></svg>
<div class="t" style="left:289px;top:224px;color:#808080;letter-spacing:-0.1px">Atterberg Limits [WA120.1,121.1,122.1,123.1]</div>
<svg style="left:268px;top:238px" width="17" height="16" viewBox="0 0 17 16" shape-rendering="crispEdges"><path d="M0 0 L4 0 L10 6 L7 9 L0 3 Z" fill="#F0D070"/>
<path d="M4.5 0.5 L9.5 5.5" stroke="#902800" stroke-dasharray="1 1"/>
<path d="M5.5 5.5 L8.5 4.5 L9.5 5.5 L9.5 8.5 L7.5 9.5 L5.5 8.5 Z" fill="#F8C090" stroke="#902800" stroke-width="0.9" shape-rendering="geometricPrecision"/>
<path d="M0.5 11.5 L3.5 7.5 L13.5 7.5 L15.5 10 L11 15 L5 15 L0.5 13 Z" fill="#DCE6FA" stroke="#000" stroke-width="1" shape-rendering="geometricPrecision"/>
<path d="M4 11 L6 10 L10 10 L11 11 L9 13 L6 13 Z" fill="#702000"/><rect x="6" y="10" width="3" height="1" fill="#909000"/></svg>
<div class="t" style="left:289px;top:240px;color:#808080;letter-spacing:-0.1px">Atterberg Limits [WA120.2,121.1,122.1,123.1]</div>
<svg style="left:268px;top:254px" width="17" height="16" viewBox="0 0 17 16" shape-rendering="crispEdges"><path d="M0 0 L4 0 L10 6 L7 9 L0 3 Z" fill="#F0D070"/>
<path d="M4.5 0.5 L9.5 5.5" stroke="#902800" stroke-dasharray="1 1"/>
<path d="M5.5 5.5 L8.5 4.5 L9.5 5.5 L9.5 8.5 L7.5 9.5 L5.5 8.5 Z" fill="#F8C090" stroke="#902800" stroke-width="0.9" shape-rendering="geometricPrecision"/>
<path d="M0.5 11.5 L3.5 7.5 L13.5 7.5 L15.5 10 L11 15 L5 15 L0.5 13 Z" fill="#DCE6FA" stroke="#000" stroke-width="1" shape-rendering="geometricPrecision"/>
<path d="M4 11 L6 10 L10 10 L11 11 L9 13 L6 13 Z" fill="#702000"/><rect x="6" y="10" width="3" height="1" fill="#909000"/></svg>
<div class="t" style="left:289px;top:256px;color:#808080;letter-spacing:-0.1px">Atterberg Limits Casagrande [AS1289.3.1.2/2.1/3.1/4.1]</div>
<svg style="left:270px;top:270px" width="14" height="14" viewBox="0 0 14 14" shape-rendering="crispEdges"><rect x="0" y="0" width="13" height="13" fill="#000"/><rect x="0" y="13" width="1" height="1" fill="#000"/>
<rect x="1" y="0" width="2" height="13" fill="#C06A18"/><rect x="4" y="0" width="2" height="13" fill="#C06A18"/><rect x="7" y="0" width="2" height="13" fill="#C06A18"/><rect x="10" y="0" width="2" height="13" fill="#C06A18"/></svg>
<div class="a" style="left:287px;top:270px;width:237px;height:16px;background:#E0DFE3;"></div>
<div class="t" style="left:289px;top:272px;letter-spacing:-0.13px">Average Least Dimension - Direct Method [Q202]</div>
<svg style="left:270px;top:286px" width="14" height="14" viewBox="0 0 14 14" shape-rendering="crispEdges"><rect x="0" y="0" width="13" height="13" fill="#000"/><rect x="0" y="13" width="1" height="1" fill="#000"/>
<rect x="1" y="0" width="2" height="13" fill="#C06A18"/><rect x="4" y="0" width="2" height="13" fill="#C06A18"/><rect x="7" y="0" width="2" height="13" fill="#C06A18"/><rect x="10" y="0" width="2" height="13" fill="#C06A18"/></svg>
<div class="t" style="left:289px;top:288px;color:#808080;letter-spacing:-0.1px">Average Least Dimension - Indirect Method [Q202]</div>
<svg style="left:270px;top:302px" width="14" height="16" viewBox="0 0 14 16" shape-rendering="crispEdges"><rect x="0" y="0" width="13" height="9" fill="#000"/><rect x="0" y="9" width="1" height="1" fill="#000"/>
<rect x="1" y="0" width="2" height="9" fill="#C06A18"/><rect x="4" y="0" width="2" height="9" fill="#C06A18"/><rect x="7" y="0" width="2" height="9" fill="#C06A18"/><rect x="10" y="0" width="2" height="9" fill="#C06A18"/>
<text x="5.5" y="15.5" font-family="Liberation Sans" font-weight="bold" font-size="7" fill="#000" textLength="7.5" lengthAdjust="spacingAndGlyphs">10</text></svg>
<div class="t" style="left:289px;top:304px;color:#808080;letter-spacing:-0.03px">Average Least Dimension [AS1141.20.1]</div>
<svg style="left:268px;top:318px" width="15" height="15" viewBox="0 0 15 15" shape-rendering="crispEdges"><rect x="0" y="0" width="15" height="15" fill="#0000CC"/><rect x="1" y="3" width="13" height="11" fill="#fff"/>
<text x="3" y="13" font-family="Liberation Sans" font-weight="bold" font-size="12" fill="#CC0000" stroke="#CC0000" stroke-width="0.5" shape-rendering="geometricPrecision">R</text></svg>
<div class="t" style="left:289px;top:320px;color:#808080;letter-spacing:-0.03px">Average Least Dimension [AS1141.20.1] *</div>
<div class="a" style="left:270px;top:334px;width:13px;height:1px;background:repeating-linear-gradient(to right,#000 0 1px,#C06A18 1px 3px)"></div>
<div class="t" style="left:270px;top:346px;letter-spacing:-0.13px">Specification Limits...</div>
<div class="a" style="left:427px;top:346px;width:13px;height:1px;background:#ACA899;"></div>
<div class="a" style="left:427px;top:346px;width:1px;height:13px;background:#ACA899;"></div>
<div class="a" style="left:428px;top:347px;width:11px;height:1px;background:#716F64;"></div>
<div class="a" style="left:428px;top:347px;width:1px;height:11px;background:#716F64;"></div>
<div class="a" style="left:427px;top:358px;width:13px;height:1px;background:#FFFFFF;"></div>
<div class="a" style="left:439px;top:346px;width:1px;height:13px;background:#FFFFFF;"></div>
<div class="a" style="left:428px;top:357px;width:11px;height:1px;background:#F1EFE2;"></div>
<div class="a" style="left:438px;top:347px;width:1px;height:11px;background:#F1EFE2;"></div>
<div class="a" style="left:429px;top:348px;width:9px;height:9px;background:#FFFFFF;"></div>
<svg style="left:430px;top:349px" width="7" height="7" viewBox="0 0 7 7" shape-rendering="crispEdges"><rect x="6" y="0" width="1" height="1" fill="#000000"/><rect x="5" y="1" width="2" height="1" fill="#000000"/><rect x="0" y="2" width="1" height="1" fill="#000000"/><rect x="4" y="2" width="3" height="1" fill="#000000"/><rect x="0" y="3" width="2" height="1" fill="#000000"/><rect x="3" y="3" width="3" height="1" fill="#000000"/><rect x="0" y="4" width="5" height="1" fill="#000000"/><rect x="1" y="5" width="3" height="1" fill="#000000"/><rect x="2" y="6" width="1" height="1" fill="#000000"/></svg>
<div class="t" style="left:443px;top:346px;letter-spacing:-0.08px">Save changes to all documents using the same fields</div>
<div class="a" style="left:824px;top:345px;width:37px;height:18px;background:#E0DFE3;border-left:1px solid #FFFFFF;border-top:1px solid #FFFFFF;border-radius:3px 0 0 0"></div>
<div class="t" style="left:829px;top:349px;">Used</div>
<div class="a" style="left:860px;top:343px;width:41px;height:20px;background:#E0DFE3;border-left:1px solid #FFFFFF;border-top:1px solid #FFFFFF;border-right:1px solid #9C9A90;border-radius:2px 2px 0 0"></div>
<div class="t" style="left:868px;top:347px;">All</div>
<div class="a" style="left:266px;top:363px;width:637px;height:372px;background:#000000;"></div>
<div class="a" style="left:267px;top:364px;width:611px;height:370px;background:#FFFFFF;"></div>
<div class="a" style="left:879px;top:364px;width:23px;height:370px;background:#E0DFE3;"></div>
<div class="a" style="left:885px;top:381px;width:17px;height:336px;background:repeating-conic-gradient(#FFFFFF 0 25%,#E0DFE3 0 50%) 0 0/2px 2px"></div>
<div class="a" style="left:885px;top:364px;width:17px;height:17px;background:#E0DFE3;"></div>
<div class="a" style="left:885px;top:364px;width:17px;height:1px;background:#F1EFE2;"></div>
<div class="a" style="left:885px;top:364px;width:1px;height:17px;background:#F1EFE2;"></div>
<div class="a" style="left:886px;top:365px;width:15px;height:1px;background:#FFFFFF;"></div>
<div class="a" style="left:886px;top:365px;width:1px;height:15px;background:#FFFFFF;"></div>
<div class="a" style="left:885px;top:380px;width:17px;height:1px;background:#716F64;"></div>
<div class="a" style="left:901px;top:364px;width:1px;height:17px;background:#716F64;"></div>
<div class="a" style="left:886px;top:379px;width:15px;height:1px;background:#ACA899;"></div>
<div class="a" style="left:900px;top:365px;width:1px;height:15px;background:#ACA899;"></div>
<div class="a" style="left:893px;top:370px;width:1px;height:1px;background:#000;"></div>
<div class="a" style="left:892px;top:371px;width:3px;height:1px;background:#000;"></div>
<div class="a" style="left:891px;top:372px;width:5px;height:1px;background:#000;"></div>
<div class="a" style="left:890px;top:373px;width:7px;height:1px;background:#000;"></div>
<div class="a" style="left:885px;top:381px;width:17px;height:17px;background:#E0DFE3;"></div>
<div class="a" style="left:885px;top:381px;width:17px;height:1px;background:#F1EFE2;"></div>
<div class="a" style="left:885px;top:381px;width:1px;height:17px;background:#F1EFE2;"></div>
<div class="a" style="left:886px;top:382px;width:15px;height:1px;background:#FFFFFF;"></div>
<div class="a" style="left:886px;top:382px;width:1px;height:15px;background:#FFFFFF;"></div>
<div class="a" style="left:885px;top:397px;width:17px;height:1px;background:#716F64;"></div>
<div class="a" style="left:901px;top:381px;width:1px;height:17px;background:#716F64;"></div>
<div class="a" style="left:886px;top:396px;width:15px;height:1px;background:#ACA899;"></div>
<div class="a" style="left:900px;top:382px;width:1px;height:15px;background:#ACA899;"></div>
<div class="a" style="left:885px;top:717px;width:17px;height:17px;background:#E0DFE3;"></div>
<div class="a" style="left:885px;top:717px;width:17px;height:1px;background:#F1EFE2;"></div>
<div class="a" style="left:885px;top:717px;width:1px;height:17px;background:#F1EFE2;"></div>
<div class="a" style="left:886px;top:718px;width:15px;height:1px;background:#FFFFFF;"></div>
<div class="a" style="left:886px;top:718px;width:1px;height:15px;background:#FFFFFF;"></div>
<div class="a" style="left:885px;top:733px;width:17px;height:1px;background:#716F64;"></div>
<div class="a" style="left:901px;top:717px;width:1px;height:17px;background:#716F64;"></div>
<div class="a" style="left:886px;top:732px;width:15px;height:1px;background:#ACA899;"></div>
<div class="a" style="left:900px;top:718px;width:1px;height:15px;background:#ACA899;"></div>
<div class="a" style="left:890px;top:724px;width:7px;height:1px;background:#000;"></div>
<div class="a" style="left:891px;top:725px;width:5px;height:1px;background:#000;"></div>
<div class="a" style="left:892px;top:726px;width:3px;height:1px;background:#000;"></div>
<div class="a" style="left:893px;top:727px;width:1px;height:1px;background:#000;"></div>
<div class="a" style="left:267px;top:364px;width:199px;height:16px;background:#E0DFE3;"></div>
<div class="a" style="left:267px;top:364px;width:199px;height:1px;background:#FFFFFF;"></div>
<div class="a" style="left:267px;top:364px;width:1px;height:16px;background:#FFFFFF;"></div>
<div class="a" style="left:466px;top:364px;width:1px;height:17px;background:#000000;"></div>
<div class="a" style="left:267px;top:380px;width:200px;height:1px;background:#000000;"></div>
<div class="t" style="left:270px;top:366px;">Field</div>
<div class="a" style="left:467px;top:364px;width:199px;height:16px;background:#E0DFE3;"></div>
<div class="a" style="left:467px;top:364px;width:199px;height:1px;background:#FFFFFF;"></div>
<div class="a" style="left:467px;top:364px;width:1px;height:16px;background:#FFFFFF;"></div>
<div class="a" style="left:666px;top:364px;width:1px;height:17px;background:#000000;"></div>
<div class="a" style="left:467px;top:380px;width:200px;height:1px;background:#000000;"></div>
<div class="t" style="left:470px;top:366px;">Type</div>
<div class="a" style="left:667px;top:364px;width:52px;height:16px;background:#E0DFE3;"></div>
<div class="a" style="left:667px;top:364px;width:52px;height:1px;background:#FFFFFF;"></div>
<div class="a" style="left:667px;top:364px;width:1px;height:16px;background:#FFFFFF;"></div>
<div class="a" style="left:719px;top:364px;width:1px;height:17px;background:#000000;"></div>
<div class="a" style="left:667px;top:380px;width:53px;height:1px;background:#000000;"></div>
<div class="t" style="left:670px;top:366px;">Value 1</div>
<div class="a" style="left:720px;top:364px;width:52px;height:16px;background:#E0DFE3;"></div>
<div class="a" style="left:720px;top:364px;width:52px;height:1px;background:#FFFFFF;"></div>
<div class="a" style="left:720px;top:364px;width:1px;height:16px;background:#FFFFFF;"></div>
<div class="a" style="left:772px;top:364px;width:1px;height:17px;background:#000000;"></div>
<div class="a" style="left:720px;top:380px;width:53px;height:1px;background:#000000;"></div>
<div class="t" style="left:723px;top:366px;">Value 2</div>
<div class="a" style="left:773px;top:364px;width:52px;height:16px;background:#E0DFE3;"></div>
<div class="a" style="left:773px;top:364px;width:52px;height:1px;background:#FFFFFF;"></div>
<div class="a" style="left:773px;top:364px;width:1px;height:16px;background:#FFFFFF;"></div>
<div class="a" style="left:825px;top:364px;width:1px;height:17px;background:#000000;"></div>
<div class="a" style="left:773px;top:380px;width:53px;height:1px;background:#000000;"></div>
<div class="t" style="left:776px;top:366px;">Format</div>
<div class="a" style="left:826px;top:364px;width:52px;height:16px;background:#E0DFE3;"></div>
<div class="a" style="left:826px;top:364px;width:52px;height:1px;background:#FFFFFF;"></div>
<div class="a" style="left:826px;top:364px;width:1px;height:16px;background:#FFFFFF;"></div>
<div class="a" style="left:878px;top:364px;width:1px;height:17px;background:#000000;"></div>
<div class="a" style="left:826px;top:380px;width:53px;height:1px;background:#000000;"></div>
<div class="t" style="left:829px;top:366px;">Used</div>
<div class="a" style="left:267px;top:381px;width:199px;height:17px;background:#E0DFE3;"></div>
<div class="a" style="left:267px;top:381px;width:199px;height:1px;background:#FFFFFF;"></div>
<div class="a" style="left:267px;top:381px;width:1px;height:17px;background:#FFFFFF;"></div>
<div class="a" style="left:267px;top:397px;width:199px;height:1px;background:#000000;"></div>
<div class="a" style="left:466px;top:381px;width:1px;height:17px;background:#000000;"></div>
<div class="t" style="left:270px;top:383px;letter-spacing:-0.15px">ALD</div>
<div class="a" style="left:467px;top:397px;width:411px;height:1px;background:#C0C0C0;"></div>
<div class="a" style="left:666px;top:381px;width:1px;height:17px;background:#C0C0C0;"></div>
<div class="a" style="left:719px;top:381px;width:1px;height:17px;background:#C0C0C0;"></div>
<div class="a" style="left:772px;top:381px;width:1px;height:17px;background:#C0C0C0;"></div>
<div class="a" style="left:825px;top:381px;width:1px;height:17px;background:#C0C0C0;"></div>
<div class="t" style="left:470px;top:383px;">(none)</div>
<div class="t" style="left:829px;top:383px;">n/a</div>
<div class="a" style="left:267px;top:398px;width:199px;height:17px;background:#E0DFE3;"></div>
<div class="a" style="left:267px;top:398px;width:199px;height:1px;background:#FFFFFF;"></div>
<div class="a" style="left:267px;top:398px;width:1px;height:17px;background:#FFFFFF;"></div>
<div class="a" style="left:267px;top:414px;width:199px;height:1px;background:#000000;"></div>
<div class="a" style="left:466px;top:398px;width:1px;height:17px;background:#000000;"></div>
<div class="t" style="left:270px;top:400px;letter-spacing:-0.15px">ClassSize1</div>
<div class="a" style="left:467px;top:414px;width:411px;height:1px;background:#C0C0C0;"></div>
<div class="a" style="left:666px;top:398px;width:1px;height:17px;background:#C0C0C0;"></div>
<div class="a" style="left:719px;top:398px;width:1px;height:17px;background:#C0C0C0;"></div>
<div class="a" style="left:772px;top:398px;width:1px;height:17px;background:#C0C0C0;"></div>
<div class="a" style="left:825px;top:398px;width:1px;height:17px;background:#C0C0C0;"></div>
<div class="t" style="left:470px;top:400px;">(none)</div>
<div class="t" style="left:829px;top:400px;">n/a</div>
<div class="a" style="left:267px;top:415px;width:199px;height:17px;background:#E0DFE3;"></div>
<div class="a" style="left:267px;top:415px;width:199px;height:1px;background:#FFFFFF;"></div>
<div class="a" style="left:267px;top:415px;width:1px;height:17px;background:#FFFFFF;"></div>
<div class="a" style="left:267px;top:431px;width:199px;height:1px;background:#000000;"></div>
<div class="a" style="left:466px;top:415px;width:1px;height:17px;background:#000000;"></div>
<div class="t" style="left:270px;top:417px;letter-spacing:-0.15px">ClassSize2</div>
<div class="a" style="left:467px;top:431px;width:411px;height:1px;background:#C0C0C0;"></div>
<div class="a" style="left:666px;top:415px;width:1px;height:17px;background:#C0C0C0;"></div>
<div class="a" style="left:719px;top:415px;width:1px;height:17px;background:#C0C0C0;"></div>
<div class="a" style="left:772px;top:415px;width:1px;height:17px;background:#C0C0C0;"></div>
<div class="a" style="left:825px;top:415px;width:1px;height:17px;background:#C0C0C0;"></div>
<div class="t" style="left:470px;top:417px;">(none)</div>
<div class="t" style="left:829px;top:417px;">n/a</div>
<div class="a" style="left:267px;top:432px;width:199px;height:17px;background:#E0DFE3;"></div>
<div class="a" style="left:267px;top:432px;width:199px;height:1px;background:#FFFFFF;"></div>
<div class="a" style="left:267px;top:432px;width:1px;height:17px;background:#FFFFFF;"></div>
<div class="a" style="left:267px;top:448px;width:199px;height:1px;background:#000000;"></div>
<div class="a" style="left:466px;top:432px;width:1px;height:17px;background:#000000;"></div>
<div class="t" style="left:270px;top:434px;letter-spacing:-0.15px">ClassSize3</div>
<div class="a" style="left:467px;top:448px;width:411px;height:1px;background:#C0C0C0;"></div>
<div class="a" style="left:666px;top:432px;width:1px;height:17px;background:#C0C0C0;"></div>
<div class="a" style="left:719px;top:432px;width:1px;height:17px;background:#C0C0C0;"></div>
<div class="a" style="left:772px;top:432px;width:1px;height:17px;background:#C0C0C0;"></div>
<div class="a" style="left:825px;top:432px;width:1px;height:17px;background:#C0C0C0;"></div>
<div class="t" style="left:470px;top:434px;">(none)</div>
<div class="t" style="left:829px;top:434px;">n/a</div>
<div class="a" style="left:267px;top:449px;width:199px;height:17px;background:#E0DFE3;"></div>
<div class="a" style="left:267px;top:449px;width:199px;height:1px;background:#FFFFFF;"></div>
<div class="a" style="left:267px;top:449px;width:1px;height:17px;background:#FFFFFF;"></div>
<div class="a" style="left:267px;top:465px;width:199px;height:1px;background:#000000;"></div>
<div class="a" style="left:466px;top:449px;width:1px;height:17px;background:#000000;"></div>
<div class="t" style="left:270px;top:451px;letter-spacing:-0.15px">ClassSize4</div>
<div class="a" style="left:467px;top:465px;width:411px;height:1px;background:#C0C0C0;"></div>
<div class="a" style="left:666px;top:449px;width:1px;height:17px;background:#C0C0C0;"></div>
<div class="a" style="left:719px;top:449px;width:1px;height:17px;background:#C0C0C0;"></div>
<div class="a" style="left:772px;top:449px;width:1px;height:17px;background:#C0C0C0;"></div>
<div class="a" style="left:825px;top:449px;width:1px;height:17px;background:#C0C0C0;"></div>
<div class="t" style="left:470px;top:451px;">Equal to (a=v1)</div>
<div class="t" style="left:670px;top:451px;">20</div>
<div class="t" style="left:829px;top:451px;">n/a</div>
<div class="a" style="left:267px;top:466px;width:199px;height:17px;background:#E0DFE3;"></div>
<div class="a" style="left:267px;top:466px;width:199px;height:1px;background:#FFFFFF;"></div>
<div class="a" style="left:267px;top:466px;width:1px;height:17px;background:#FFFFFF;"></div>
<div class="a" style="left:267px;top:482px;width:199px;height:1px;background:#000000;"></div>
<div class="a" style="left:466px;top:466px;width:1px;height:17px;background:#000000;"></div>
<div class="t" style="left:270px;top:468px;letter-spacing:-0.15px">ClassSize5</div>
<div class="a" style="left:467px;top:482px;width:411px;height:1px;background:#C0C0C0;"></div>
<div class="a" style="left:666px;top:466px;width:1px;height:17px;background:#C0C0C0;"></div>
<div class="a" style="left:719px;top:466px;width:1px;height:17px;background:#C0C0C0;"></div>
<div class="a" style="left:772px;top:466px;width:1px;height:17px;background:#C0C0C0;"></div>
<div class="a" style="left:825px;top:466px;width:1px;height:17px;background:#C0C0C0;"></div>
<div class="t" style="left:470px;top:468px;">Less than(a &lt; v1)</div>
<div class="t" style="left:670px;top:468px;">30</div>
<div class="t" style="left:829px;top:468px;"><b>n/a</b></div>
<div class="a" style="left:267px;top:483px;width:199px;height:17px;background:#E0DFE3;"></div>
<div class="a" style="left:267px;top:483px;width:199px;height:1px;background:#FFFFFF;"></div>
<div class="a" style="left:267px;top:483px;width:1px;height:17px;background:#FFFFFF;"></div>
<div class="a" style="left:267px;top:499px;width:199px;height:1px;background:#000000;"></div>
<div class="a" style="left:466px;top:483px;width:1px;height:17px;background:#000000;"></div>
<div class="t" style="left:270px;top:485px;letter-spacing:-0.15px">ClassSize6</div>
<div class="a" style="left:467px;top:499px;width:411px;height:1px;background:#C0C0C0;"></div>
<div class="a" style="left:666px;top:483px;width:1px;height:17px;background:#C0C0C0;"></div>
<div class="a" style="left:719px;top:483px;width:1px;height:17px;background:#C0C0C0;"></div>
<div class="a" style="left:772px;top:483px;width:1px;height:17px;background:#C0C0C0;"></div>
<div class="a" style="left:825px;top:483px;width:1px;height:17px;background:#C0C0C0;"></div>
<div class="t" style="left:470px;top:485px;">Exclusive range(v1 &lt; a &lt; v2)</div>
<div class="t" style="left:670px;top:485px;">20</div>
<div class="t" style="left:723px;top:485px;">30</div>
<div class="t" style="left:829px;top:485px;">n/a</div>
<div class="a" style="left:267px;top:500px;width:199px;height:17px;background:#E0DFE3;"></div>
<div class="a" style="left:267px;top:500px;width:199px;height:1px;background:#FFFFFF;"></div>
<div class="a" style="left:267px;top:500px;width:1px;height:17px;background:#FFFFFF;"></div>
<div class="a" style="left:267px;top:516px;width:199px;height:1px;background:#000000;"></div>
<div class="a" style="left:466px;top:500px;width:1px;height:17px;background:#000000;"></div>
<div class="t" style="left:270px;top:502px;letter-spacing:-0.15px">ClassSize7</div>
<div class="a" style="left:467px;top:516px;width:411px;height:1px;background:#C0C0C0;"></div>
<div class="a" style="left:666px;top:500px;width:1px;height:17px;background:#C0C0C0;"></div>
<div class="a" style="left:719px;top:500px;width:1px;height:17px;background:#C0C0C0;"></div>
<div class="a" style="left:772px;top:500px;width:1px;height:17px;background:#C0C0C0;"></div>
<div class="a" style="left:825px;top:500px;width:1px;height:17px;background:#C0C0C0;"></div>
<div class="t" style="left:470px;top:502px;">(none)</div>
<div class="t" style="left:829px;top:502px;">n/a</div>
<div class="a" style="left:267px;top:517px;width:199px;height:17px;background:#E0DFE3;"></div>
<div class="a" style="left:267px;top:517px;width:199px;height:1px;background:#FFFFFF;"></div>
<div class="a" style="left:267px;top:517px;width:1px;height:17px;background:#FFFFFF;"></div>
<div class="a" style="left:267px;top:533px;width:199px;height:1px;background:#000000;"></div>
<div class="a" style="left:466px;top:517px;width:1px;height:17px;background:#000000;"></div>
<div class="t" style="left:270px;top:519px;letter-spacing:-0.15px">ClassSize8</div>
<div class="a" style="left:467px;top:533px;width:411px;height:1px;background:#C0C0C0;"></div>
<div class="a" style="left:666px;top:517px;width:1px;height:17px;background:#C0C0C0;"></div>
<div class="a" style="left:719px;top:517px;width:1px;height:17px;background:#C0C0C0;"></div>
<div class="a" style="left:772px;top:517px;width:1px;height:17px;background:#C0C0C0;"></div>
<div class="a" style="left:825px;top:517px;width:1px;height:17px;background:#C0C0C0;"></div>
<div class="t" style="left:470px;top:519px;">(none)</div>
<div class="t" style="left:829px;top:519px;">n/a</div>
<div class="a" style="left:267px;top:534px;width:199px;height:17px;background:#E0DFE3;"></div>
<div class="a" style="left:267px;top:534px;width:199px;height:1px;background:#FFFFFF;"></div>
<div class="a" style="left:267px;top:534px;width:1px;height:17px;background:#FFFFFF;"></div>
<div class="a" style="left:267px;top:550px;width:199px;height:1px;background:#000000;"></div>
<div class="a" style="left:466px;top:534px;width:1px;height:17px;background:#000000;"></div>
<div class="t" style="left:270px;top:536px;letter-spacing:-0.15px">ClassSize9</div>
<div class="a" style="left:467px;top:550px;width:411px;height:1px;background:#C0C0C0;"></div>
<div class="a" style="left:666px;top:534px;width:1px;height:17px;background:#C0C0C0;"></div>
<div class="a" style="left:719px;top:534px;width:1px;height:17px;background:#C0C0C0;"></div>
<div class="a" style="left:772px;top:534px;width:1px;height:17px;background:#C0C0C0;"></div>
<div class="a" style="left:825px;top:534px;width:1px;height:17px;background:#C0C0C0;"></div>
<div class="t" style="left:470px;top:536px;">(none)</div>
<div class="t" style="left:829px;top:536px;">n/a</div>
<div class="a" style="left:267px;top:551px;width:199px;height:17px;background:#E0DFE3;"></div>
<div class="a" style="left:267px;top:551px;width:199px;height:1px;background:#FFFFFF;"></div>
<div class="a" style="left:267px;top:551px;width:1px;height:17px;background:#FFFFFF;"></div>
<div class="a" style="left:267px;top:567px;width:199px;height:1px;background:#000000;"></div>
<div class="a" style="left:466px;top:551px;width:1px;height:17px;background:#000000;"></div>
<div class="t" style="left:270px;top:553px;letter-spacing:-0.15px">ClassSize10</div>
<div class="a" style="left:467px;top:567px;width:411px;height:1px;background:#C0C0C0;"></div>
<div class="a" style="left:666px;top:551px;width:1px;height:17px;background:#C0C0C0;"></div>
<div class="a" style="left:719px;top:551px;width:1px;height:17px;background:#C0C0C0;"></div>
<div class="a" style="left:772px;top:551px;width:1px;height:17px;background:#C0C0C0;"></div>
<div class="a" style="left:825px;top:551px;width:1px;height:17px;background:#C0C0C0;"></div>
<div class="t" style="left:470px;top:553px;">(none)</div>
<div class="t" style="left:829px;top:553px;">n/a</div>
<div class="a" style="left:267px;top:568px;width:199px;height:17px;background:#E0DFE3;"></div>
<div class="a" style="left:267px;top:568px;width:199px;height:1px;background:#FFFFFF;"></div>
<div class="a" style="left:267px;top:568px;width:1px;height:17px;background:#FFFFFF;"></div>
<div class="a" style="left:267px;top:584px;width:199px;height:1px;background:#000000;"></div>
<div class="a" style="left:466px;top:568px;width:1px;height:17px;background:#000000;"></div>
<div class="t" style="left:270px;top:570px;letter-spacing:-0.15px">ClassSize11</div>
<div class="a" style="left:467px;top:584px;width:411px;height:1px;background:#C0C0C0;"></div>
<div class="a" style="left:666px;top:568px;width:1px;height:17px;background:#C0C0C0;"></div>
<div class="a" style="left:719px;top:568px;width:1px;height:17px;background:#C0C0C0;"></div>
<div class="a" style="left:772px;top:568px;width:1px;height:17px;background:#C0C0C0;"></div>
<div class="a" style="left:825px;top:568px;width:1px;height:17px;background:#C0C0C0;"></div>
<div class="t" style="left:470px;top:570px;">(none)</div>
<div class="t" style="left:829px;top:570px;">n/a</div>
<div class="a" style="left:267px;top:585px;width:199px;height:17px;background:#E0DFE3;"></div>
<div class="a" style="left:267px;top:585px;width:199px;height:1px;background:#FFFFFF;"></div>
<div class="a" style="left:267px;top:585px;width:1px;height:17px;background:#FFFFFF;"></div>
<div class="a" style="left:267px;top:601px;width:199px;height:1px;background:#000000;"></div>
<div class="a" style="left:466px;top:585px;width:1px;height:17px;background:#000000;"></div>
<div class="t" style="left:270px;top:587px;letter-spacing:-0.15px">ClassSize12</div>
<div class="a" style="left:467px;top:601px;width:411px;height:1px;background:#C0C0C0;"></div>
<div class="a" style="left:666px;top:585px;width:1px;height:17px;background:#C0C0C0;"></div>
<div class="a" style="left:719px;top:585px;width:1px;height:17px;background:#C0C0C0;"></div>
<div class="a" style="left:772px;top:585px;width:1px;height:17px;background:#C0C0C0;"></div>
<div class="a" style="left:825px;top:585px;width:1px;height:17px;background:#C0C0C0;"></div>
<div class="t" style="left:470px;top:587px;">(none)</div>
<div class="t" style="left:829px;top:587px;">n/a</div>
<div class="a" style="left:267px;top:602px;width:199px;height:17px;background:#E0DFE3;"></div>
<div class="a" style="left:267px;top:602px;width:199px;height:1px;background:#FFFFFF;"></div>
<div class="a" style="left:267px;top:602px;width:1px;height:17px;background:#FFFFFF;"></div>
<div class="a" style="left:267px;top:618px;width:199px;height:1px;background:#000000;"></div>
<div class="a" style="left:466px;top:602px;width:1px;height:17px;background:#000000;"></div>
<div class="t" style="left:270px;top:604px;letter-spacing:-0.15px">ClassSize13</div>
<div class="a" style="left:467px;top:618px;width:411px;height:1px;background:#C0C0C0;"></div>
<div class="a" style="left:666px;top:602px;width:1px;height:17px;background:#C0C0C0;"></div>
<div class="a" style="left:719px;top:602px;width:1px;height:17px;background:#C0C0C0;"></div>
<div class="a" style="left:772px;top:602px;width:1px;height:17px;background:#C0C0C0;"></div>
<div class="a" style="left:825px;top:602px;width:1px;height:17px;background:#C0C0C0;"></div>
<div class="t" style="left:470px;top:604px;">(none)</div>
<div class="t" style="left:829px;top:604px;">n/a</div>
<div class="a" style="left:267px;top:619px;width:199px;height:17px;background:#E0DFE3;"></div>
<div class="a" style="left:267px;top:619px;width:199px;height:1px;background:#FFFFFF;"></div>
<div class="a" style="left:267px;top:619px;width:1px;height:17px;background:#FFFFFF;"></div>
<div class="a" style="left:267px;top:635px;width:199px;height:1px;background:#000000;"></div>
<div class="a" style="left:466px;top:619px;width:1px;height:17px;background:#000000;"></div>
<div class="t" style="left:270px;top:621px;letter-spacing:-0.15px">ClassSize14</div>
<div class="a" style="left:467px;top:635px;width:411px;height:1px;background:#C0C0C0;"></div>
<div class="a" style="left:666px;top:619px;width:1px;height:17px;background:#C0C0C0;"></div>
<div class="a" style="left:719px;top:619px;width:1px;height:17px;background:#C0C0C0;"></div>
<div class="a" style="left:772px;top:619px;width:1px;height:17px;background:#C0C0C0;"></div>
<div class="a" style="left:825px;top:619px;width:1px;height:17px;background:#C0C0C0;"></div>
<div class="t" style="left:470px;top:621px;">(none)</div>
<div class="t" style="left:829px;top:621px;">n/a</div>
<div class="a" style="left:267px;top:636px;width:199px;height:17px;background:#E0DFE3;"></div>
<div class="a" style="left:267px;top:636px;width:199px;height:1px;background:#FFFFFF;"></div>
<div class="a" style="left:267px;top:636px;width:1px;height:17px;background:#FFFFFF;"></div>
<div class="a" style="left:267px;top:652px;width:199px;height:1px;background:#000000;"></div>
<div class="a" style="left:466px;top:636px;width:1px;height:17px;background:#000000;"></div>
<div class="t" style="left:270px;top:638px;letter-spacing:-0.15px">ClassSize15</div>
<div class="a" style="left:467px;top:652px;width:411px;height:1px;background:#C0C0C0;"></div>
<div class="a" style="left:666px;top:636px;width:1px;height:17px;background:#C0C0C0;"></div>
<div class="a" style="left:719px;top:636px;width:1px;height:17px;background:#C0C0C0;"></div>
<div class="a" style="left:772px;top:636px;width:1px;height:17px;background:#C0C0C0;"></div>
<div class="a" style="left:825px;top:636px;width:1px;height:17px;background:#C0C0C0;"></div>
<div class="t" style="left:470px;top:638px;">(none)</div>
<div class="t" style="left:829px;top:638px;">n/a</div>
<div class="a" style="left:267px;top:653px;width:199px;height:17px;background:#E0DFE3;"></div>
<div class="a" style="left:267px;top:653px;width:199px;height:1px;background:#FFFFFF;"></div>
<div class="a" style="left:267px;top:653px;width:1px;height:17px;background:#FFFFFF;"></div>
<div class="a" style="left:267px;top:669px;width:199px;height:1px;background:#000000;"></div>
<div class="a" style="left:466px;top:653px;width:1px;height:17px;background:#000000;"></div>
<div class="t" style="left:270px;top:655px;letter-spacing:-0.15px">ClassSize16</div>
<div class="a" style="left:467px;top:669px;width:411px;height:1px;background:#C0C0C0;"></div>
<div class="a" style="left:666px;top:653px;width:1px;height:17px;background:#C0C0C0;"></div>
<div class="a" style="left:719px;top:653px;width:1px;height:17px;background:#C0C0C0;"></div>
<div class="a" style="left:772px;top:653px;width:1px;height:17px;background:#C0C0C0;"></div>
<div class="a" style="left:825px;top:653px;width:1px;height:17px;background:#C0C0C0;"></div>
<div class="t" style="left:470px;top:655px;">(none)</div>
<div class="t" style="left:829px;top:655px;">n/a</div>
<div class="a" style="left:267px;top:670px;width:199px;height:17px;background:#E0DFE3;"></div>
<div class="a" style="left:267px;top:670px;width:199px;height:1px;background:#FFFFFF;"></div>
<div class="a" style="left:267px;top:670px;width:1px;height:17px;background:#FFFFFF;"></div>
<div class="a" style="left:267px;top:686px;width:199px;height:1px;background:#000000;"></div>
<div class="a" style="left:466px;top:670px;width:1px;height:17px;background:#000000;"></div>
<div class="t" style="left:270px;top:672px;letter-spacing:-0.15px">ClassSize17</div>
<div class="a" style="left:467px;top:686px;width:411px;height:1px;background:#C0C0C0;"></div>
<div class="a" style="left:666px;top:670px;width:1px;height:17px;background:#C0C0C0;"></div>
<div class="a" style="left:719px;top:670px;width:1px;height:17px;background:#C0C0C0;"></div>
<div class="a" style="left:772px;top:670px;width:1px;height:17px;background:#C0C0C0;"></div>
<div class="a" style="left:825px;top:670px;width:1px;height:17px;background:#C0C0C0;"></div>
<div class="t" style="left:470px;top:672px;">(none)</div>
<div class="t" style="left:829px;top:672px;">n/a</div>
<div class="a" style="left:267px;top:687px;width:199px;height:17px;background:#E0DFE3;"></div>
<div class="a" style="left:267px;top:687px;width:199px;height:1px;background:#FFFFFF;"></div>
<div class="a" style="left:267px;top:687px;width:1px;height:17px;background:#FFFFFF;"></div>
<div class="a" style="left:267px;top:703px;width:199px;height:1px;background:#000000;"></div>
<div class="a" style="left:466px;top:687px;width:1px;height:17px;background:#000000;"></div>
<div class="t" style="left:270px;top:689px;letter-spacing:-0.15px">ClassSize18</div>
<div class="a" style="left:467px;top:703px;width:411px;height:1px;background:#C0C0C0;"></div>
<div class="a" style="left:666px;top:687px;width:1px;height:17px;background:#C0C0C0;"></div>
<div class="a" style="left:719px;top:687px;width:1px;height:17px;background:#C0C0C0;"></div>
<div class="a" style="left:772px;top:687px;width:1px;height:17px;background:#C0C0C0;"></div>
<div class="a" style="left:825px;top:687px;width:1px;height:17px;background:#C0C0C0;"></div>
<div class="t" style="left:470px;top:689px;">(none)</div>
<div class="t" style="left:829px;top:689px;">n/a</div>
<div class="a" style="left:267px;top:704px;width:199px;height:17px;background:#E0DFE3;"></div>
<div class="a" style="left:267px;top:704px;width:199px;height:1px;background:#FFFFFF;"></div>
<div class="a" style="left:267px;top:704px;width:1px;height:17px;background:#FFFFFF;"></div>
<div class="a" style="left:267px;top:720px;width:199px;height:1px;background:#000000;"></div>
<div class="a" style="left:466px;top:704px;width:1px;height:17px;background:#000000;"></div>
<div class="t" style="left:270px;top:706px;letter-spacing:-0.15px">ClassSize19</div>
<div class="a" style="left:467px;top:720px;width:411px;height:1px;background:#C0C0C0;"></div>
<div class="a" style="left:666px;top:704px;width:1px;height:17px;background:#C0C0C0;"></div>
<div class="a" style="left:719px;top:704px;width:1px;height:17px;background:#C0C0C0;"></div>
<div class="a" style="left:772px;top:704px;width:1px;height:17px;background:#C0C0C0;"></div>
<div class="a" style="left:825px;top:704px;width:1px;height:17px;background:#C0C0C0;"></div>
<div class="t" style="left:470px;top:706px;">(none)</div>
<div class="t" style="left:829px;top:706px;">n/a</div>
<div class="a" style="left:267px;top:721px;width:199px;height:13px;background:#E0DFE3;"></div>
<div class="a" style="left:267px;top:721px;width:199px;height:1px;background:#FFFFFF;"></div>
<div class="a" style="left:267px;top:721px;width:1px;height:13px;background:#FFFFFF;"></div>
<div class="a" style="left:466px;top:721px;width:1px;height:13px;background:#000000;"></div>
<div class="t" style="left:270px;top:723px;letter-spacing:-0.15px">ClassSize20</div>
<div class="a" style="left:666px;top:721px;width:1px;height:13px;background:#C0C0C0;"></div>
<div class="a" style="left:719px;top:721px;width:1px;height:13px;background:#C0C0C0;"></div>
<div class="a" style="left:772px;top:721px;width:1px;height:13px;background:#C0C0C0;"></div>
<div class="a" style="left:825px;top:721px;width:1px;height:13px;background:#C0C0C0;"></div>
<div class="t" style="left:470px;top:723px;">(none)</div>
<div class="t" style="left:829px;top:723px;">n/a</div>
<div class="a" style="left:466px;top:381px;width:1px;height:353px;background:#000;"></div>
<div class="a" style="left:878px;top:364px;width:1px;height:370px;background:#000;"></div>
<div class="a" style="left:4px;top:740px;width:903px;height:17px;background:#E0DFE3;"></div>
<div class="a" style="left:4px;top:740px;width:903px;height:1px;background:#E8E8EC;"></div>
<div class="a" style="left:4px;top:742px;width:200px;height:15px;background:#E0DFE3;"></div>
<div class="a" style="left:4px;top:742px;width:200px;height:1px;background:#A0A0A0;"></div>
<div class="a" style="left:4px;top:742px;width:1px;height:14px;background:#A0A0A0;"></div>
<div class="a" style="left:4px;top:756px;width:201px;height:1px;background:#FFFFFF;"></div>
<div class="a" style="left:204px;top:742px;width:1px;height:15px;background:#FFFFFF;"></div>
<div class="a" style="left:473px;top:742px;width:118px;height:15px;background:#E0DFE3;"></div>
<div class="a" style="left:473px;top:742px;width:118px;height:1px;background:#A0A0A0;"></div>
<div class="a" style="left:473px;top:742px;width:1px;height:14px;background:#A0A0A0;"></div>
<div class="a" style="left:473px;top:756px;width:119px;height:1px;background:#FFFFFF;"></div>
<div class="a" style="left:591px;top:742px;width:1px;height:15px;background:#FFFFFF;"></div>
<div class="t" style="left:478px;top:744px;color:#000;letter-spacing:-0.2px">Server: ADLD0012</div>
<div class="a" style="left:594px;top:742px;width:93px;height:15px;background:#E0DFE3;"></div>
<div class="a" style="left:594px;top:742px;width:93px;height:1px;background:#A0A0A0;"></div>
<div class="a" style="left:594px;top:742px;width:1px;height:14px;background:#A0A0A0;"></div>
<div class="a" style="left:594px;top:756px;width:94px;height:1px;background:#FFFFFF;"></div>
<div class="a" style="left:687px;top:742px;width:1px;height:15px;background:#FFFFFF;"></div>
<div class="t" style="left:599px;top:744px;color:#000;letter-spacing:-0.2px">User: spectra.qest</div>
<div class="a" style="left:690px;top:742px;width:36px;height:15px;background:#E0DFE3;"></div>
<div class="a" style="left:690px;top:742px;width:36px;height:1px;background:#A0A0A0;"></div>
<div class="a" style="left:690px;top:742px;width:1px;height:14px;background:#A0A0A0;"></div>
<div class="a" style="left:690px;top:756px;width:37px;height:1px;background:#FFFFFF;"></div>
<div class="a" style="left:726px;top:742px;width:1px;height:15px;background:#FFFFFF;"></div>
<div class="t" style="left:695px;top:744px;color:#ACA899;letter-spacing:-0.2px">CAPS</div>
<div class="a" style="left:729px;top:742px;width:25px;height:15px;background:#E0DFE3;"></div>
<div class="a" style="left:729px;top:742px;width:25px;height:1px;background:#A0A0A0;"></div>
<div class="a" style="left:729px;top:742px;width:1px;height:14px;background:#A0A0A0;"></div>
<div class="a" style="left:729px;top:756px;width:26px;height:1px;background:#FFFFFF;"></div>
<div class="a" style="left:754px;top:742px;width:1px;height:15px;background:#FFFFFF;"></div>
<div class="t" style="left:734px;top:744px;color:#ACA899;letter-spacing:-0.2px">INS</div>
<div class="a" style="left:757px;top:742px;width:32px;height:15px;background:#E0DFE3;"></div>
<div class="a" style="left:757px;top:742px;width:32px;height:1px;background:#A0A0A0;"></div>
<div class="a" style="left:757px;top:742px;width:1px;height:14px;background:#A0A0A0;"></div>
<div class="a" style="left:757px;top:756px;width:33px;height:1px;background:#FFFFFF;"></div>
<div class="a" style="left:789px;top:742px;width:1px;height:15px;background:#FFFFFF;"></div>
<div class="t" style="left:762px;top:744px;color:#000;letter-spacing:-0.2px">NUM</div>
<div class="a" style="left:792px;top:742px;width:62px;height:15px;background:#E0DFE3;"></div>
<div class="a" style="left:792px;top:742px;width:62px;height:1px;background:#A0A0A0;"></div>
<div class="a" style="left:792px;top:742px;width:1px;height:14px;background:#A0A0A0;"></div>
<div class="a" style="left:792px;top:756px;width:63px;height:1px;background:#FFFFFF;"></div>
<div class="a" style="left:854px;top:742px;width:1px;height:15px;background:#FFFFFF;"></div>
<div class="t" style="left:797px;top:744px;color:#000;letter-spacing:-0.2px">9/10/2006</div>
<div class="a" style="left:857px;top:742px;width:48px;height:15px;background:#E0DFE3;"></div>
<div class="a" style="left:857px;top:742px;width:48px;height:1px;background:#A0A0A0;"></div>
<div class="a" style="left:857px;top:742px;width:1px;height:14px;background:#A0A0A0;"></div>
<div class="a" style="left:857px;top:756px;width:49px;height:1px;background:#FFFFFF;"></div>
<div class="a" style="left:905px;top:742px;width:1px;height:15px;background:#FFFFFF;"></div>
<div class="t" style="left:862px;top:744px;color:#000;letter-spacing:-0.2px">1:09 PM</div>
</body></html>
